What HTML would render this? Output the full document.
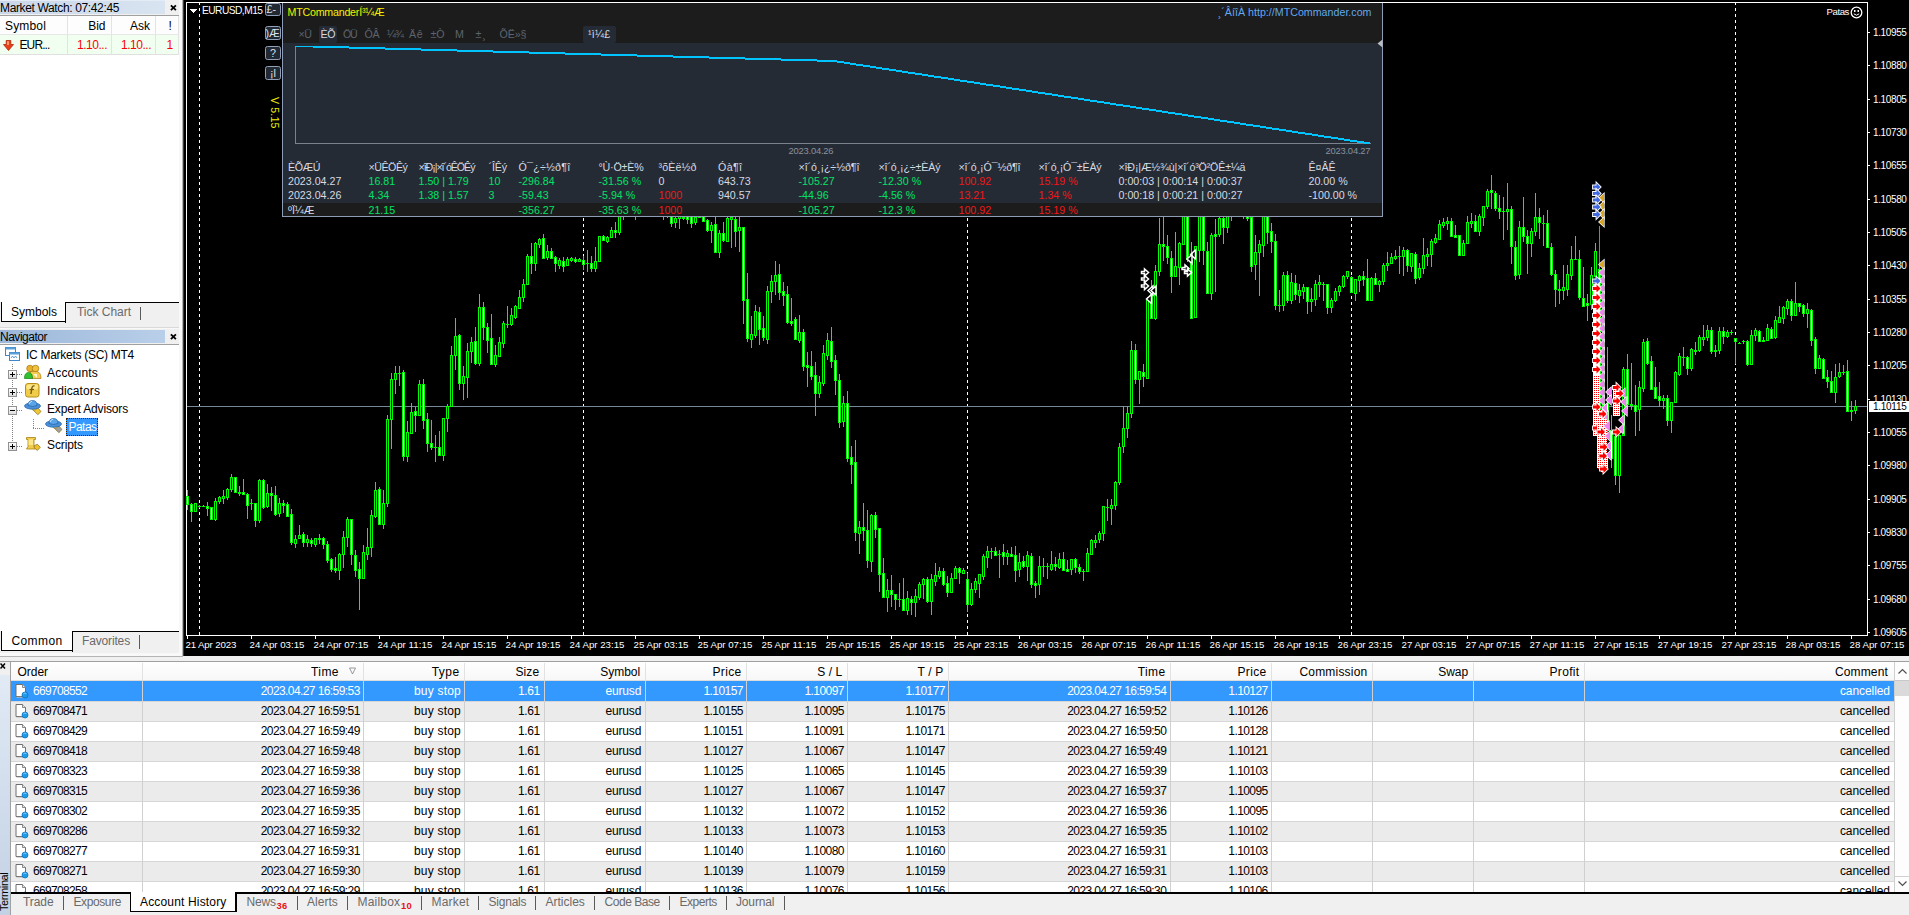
<!DOCTYPE html>
<html><head><meta charset="utf-8"><title>MT4</title>
<style>
html,body{margin:0;padding:0;}
body{width:1909px;height:915px;overflow:hidden;background:#f0f0f0;position:relative;font-family:"Liberation Sans",sans-serif;font-size:12px;}
.t{position:absolute;white-space:pre;line-height:1;}
.r{position:absolute;}
svg{position:absolute;overflow:visible;}
</style></head><body>
<div class="r" style="left:0px;top:0px;width:179px;height:656px;background:#fff;"></div>
<div class="r" style="left:0px;top:0px;width:179px;height:15px;background:#f0f0f0;"></div>
<div class="r" style="left:0px;top:0px;width:165px;height:14px;background:linear-gradient(to right,#cad7e8,#d9e4f1);"></div>
<div class="r" style="left:0px;top:0px;width:165px;height:1px;background:#e4ebf4;"></div>
<div class="t" style="top:1.64px;font-size:12px;color:#000;letter-spacing:-0.361px;left:0.00px;">Market Watch: 07:42:45</div>
<svg style="left:170px;top:4px" width="7" height="7" viewBox="0 0 7 7"><path d="M0.900 1.300 L5.900 6.100 M5.900 1.300 L0.900 6.100" stroke="#000" stroke-width="1.800" fill="none"/></svg>
<div class="r" style="left:0px;top:15px;width:179px;height:1px;background:#a0a0a0;"></div>
<div class="r" style="left:0px;top:16px;width:179px;height:19px;background:#fdfdfd;"></div>
<div class="r" style="left:67px;top:16px;width:1px;height:39px;background:#e3e3e3;"></div>
<div class="r" style="left:111px;top:16px;width:1px;height:39px;background:#e3e3e3;"></div>
<div class="r" style="left:155px;top:16px;width:1px;height:39px;background:#e3e3e3;"></div>
<div class="r" style="left:178px;top:16px;width:1px;height:39px;background:#e3e3e3;"></div>
<div class="r" style="left:0px;top:34px;width:179px;height:1px;background:#e8e8e8;"></div>
<div class="t" style="top:19.64px;font-size:12px;color:#000;letter-spacing:0.164px;left:5.00px;">Symbol</div>
<div class="t" style="top:19.64px;font-size:12px;color:#000;right:1803.50px;">Bid</div>
<div class="t" style="top:19.64px;font-size:12px;color:#000;right:1759.00px;">Ask</div>
<div class="t" style="top:19.64px;font-size:12px;color:#000;left:168.50px;">!</div>
<div class="r" style="left:0px;top:35px;width:67px;height:19px;background:#f0fff0;"></div>
<div class="r" style="left:68px;top:35px;width:43px;height:19px;background:#f0fff0;"></div>
<div class="r" style="left:112px;top:35px;width:43px;height:19px;background:#f0fff0;"></div>
<div class="r" style="left:156px;top:35px;width:22px;height:19px;background:#f0fff0;"></div>
<div class="r" style="left:0px;top:54px;width:179px;height:1px;background:#e0e0e0;"></div>
<svg style="left:3px;top:40px" width="11" height="11" viewBox="0 0 11 11"><path d="M3.2 0.5 H7.8 V4.5 H10.5 L5.5 10.5 L0.5 4.5 H3.2 Z" fill="#e8401c" stroke="#b02808" stroke-width="0.8"/><path d="M4 1.3 H6 V5 H4Z" fill="#ff9a6a"/></svg>
<div class="t" style="top:39.14px;font-size:12px;color:#000;letter-spacing:-0.890px;left:19.50px;">EUR...</div>
<div class="t" style="top:39.14px;font-size:12px;color:#ff0000;letter-spacing:-0.480px;right:1801.98px;">1.10...</div>
<div class="t" style="top:39.14px;font-size:12px;color:#ff0000;letter-spacing:-0.480px;right:1757.98px;">1.10...</div>
<div class="t" style="top:39.14px;font-size:12px;color:#ff0000;left:166.50px;">1</div>
<div class="r" style="left:0px;top:302px;width:179px;height:22px;background:#f0f0f0;"></div>
<div class="r" style="left:65px;top:302px;width:114px;height:1px;background:#000;"></div>
<div class="r" style="left:1px;top:302px;width:65px;height:20px;background:#fff;"></div>
<div class="r" style="left:1px;top:302px;width:1px;height:20px;background:#000;"></div>
<div class="r" style="left:65px;top:302px;width:1px;height:21px;background:#000;"></div>
<div class="r" style="left:1px;top:321px;width:65px;height:1.2px;background:#000;"></div>
<div class="t" style="top:306.14px;font-size:12px;color:#000;left:11.00px;">Symbols</div>
<div class="t" style="top:306.14px;font-size:12px;color:#6a6a6a;letter-spacing:-0.023px;left:77.00px;">Tick Chart</div>
<div class="r" style="left:140px;top:307px;width:1px;height:13px;background:#5a5a5a;"></div>
<div class="r" style="left:0px;top:324px;width:179px;height:6px;background:#f0f0f0;"></div>
<div class="r" style="left:0px;top:327px;width:182px;height:1px;background:#dadada;"></div>
<div class="r" style="left:0px;top:328px;width:182px;height:2px;background:#f8f8f8;"></div>
<div class="r" style="left:0px;top:329px;width:179px;height:15px;background:#f0f0f0;"></div>
<div class="r" style="left:0px;top:330px;width:165px;height:13px;background:linear-gradient(to right,#9cb7da,#b9cfe9);"></div>
<div class="t" style="top:330.64px;font-size:12px;color:#000;letter-spacing:-0.484px;left:0.00px;">Navigator</div>
<svg style="left:170px;top:333px" width="7" height="7" viewBox="0 0 7 7"><path d="M0.900 1.300 L5.900 6.100 M5.900 1.300 L0.900 6.100" stroke="#000" stroke-width="1.800" fill="none"/></svg>
<div class="r" style="left:0px;top:344px;width:179px;height:1px;background:#a0a0a0;"></div>
<div class="r" style="left:12px;top:364px;width:1px;height:84px;background:repeating-linear-gradient(to bottom,#808080 0 1px,transparent 1px 2px);"></div>
<div class="r" style="left:17px;top:374px;width:6px;height:1px;background:repeating-linear-gradient(to right,#808080 0 1px,transparent 1px 2px);"></div>
<div class="r" style="left:17px;top:392px;width:6px;height:1px;background:repeating-linear-gradient(to right,#808080 0 1px,transparent 1px 2px);"></div>
<div class="r" style="left:17px;top:410px;width:6px;height:1px;background:repeating-linear-gradient(to right,#808080 0 1px,transparent 1px 2px);"></div>
<div class="r" style="left:17px;top:446px;width:6px;height:1px;background:repeating-linear-gradient(to right,#808080 0 1px,transparent 1px 2px);"></div>
<div class="r" style="left:33px;top:419px;width:1px;height:10px;background:repeating-linear-gradient(to bottom,#808080 0 1px,transparent 1px 2px);"></div>
<div class="r" style="left:33px;top:428px;width:11px;height:1px;background:repeating-linear-gradient(to right,#808080 0 1px,transparent 1px 2px);"></div>
<div class="r" style="left:8px;top:370px;width:7px;height:7px;border:1px solid #919191;background:linear-gradient(#fff,#dcdcdc)"></div>
<div class="r" style="left:10px;top:374px;width:5px;height:1px;background:#000;"></div>
<div class="r" style="left:12px;top:372px;width:1px;height:5px;background:#000;"></div>
<div class="r" style="left:8px;top:388px;width:7px;height:7px;border:1px solid #919191;background:linear-gradient(#fff,#dcdcdc)"></div>
<div class="r" style="left:10px;top:392px;width:5px;height:1px;background:#000;"></div>
<div class="r" style="left:12px;top:390px;width:1px;height:5px;background:#000;"></div>
<div class="r" style="left:8px;top:406px;width:7px;height:7px;border:1px solid #919191;background:linear-gradient(#fff,#dcdcdc)"></div>
<div class="r" style="left:10px;top:410px;width:5px;height:1px;background:#000;"></div>
<div class="r" style="left:8px;top:442px;width:7px;height:7px;border:1px solid #919191;background:linear-gradient(#fff,#dcdcdc)"></div>
<div class="r" style="left:10px;top:446px;width:5px;height:1px;background:#000;"></div>
<div class="r" style="left:12px;top:444px;width:1px;height:5px;background:#000;"></div>
<svg style="left:5px;top:346px" width="16" height="16" viewBox="0 0 16 16">
<rect x="0.5" y="1.5" width="10" height="8" fill="#fff" stroke="#3f87c8"/><rect x="0.5" y="1.5" width="10" height="2" fill="#5aa0dc"/>
<rect x="4.5" y="6.5" width="10" height="8" fill="#fff" stroke="#3f87c8"/><rect x="4.5" y="6.5" width="10" height="2" fill="#5aa0dc"/>
<path d="M6 12 l1.5 -2 l1.5 2 l1.5 -2 l1.5 2" stroke="#3f87c8" fill="none" stroke-width="0.8"/></svg>
<svg style="left:24px;top:364px" width="18" height="17" viewBox="0 0 18 17">
<circle cx="6" cy="4.5" r="3.3" fill="#e8b030" stroke="#a87808" stroke-width=".7"/>
<circle cx="11.5" cy="4.5" r="3.3" fill="#f0c040" stroke="#a87808" stroke-width=".7"/>
<path d="M6 7.5 h7 q4 1 4 7 h-9 z" fill="#f4cc50" stroke="#a87808" stroke-width=".7"/>
<path d="M0.5 14.5 q0 -6 4 -6 q4 0 4 6 z" fill="#30c030" stroke="#108010" stroke-width=".7"/>
<path d="M9 10 l4 4 v-4z" fill="#fff6d0"/></svg>
<svg style="left:25px;top:383px" width="15" height="15" viewBox="0 0 15 15">
<rect x="0.5" y="0.5" width="13.5" height="13.5" rx="2.5" fill="#f0cc48" stroke="#b89018"/>
<rect x="1.5" y="1.5" width="11.5" height="5" rx="2" fill="#fbe78a"/>
<path d="M9.5 3 q-2.2 -.6 -2.6 2 l-1 6" stroke="#7a5c08" stroke-width="1.4" fill="none"/><path d="M4.5 6.5 h4.5" stroke="#7a5c08" stroke-width="1.2"/></svg>
<svg style="left:24px;top:400px" width="18" height="16" viewBox="0 0 18 16">
<path d="M8 7 l5 0 l4 4.5 l-3.2 3.2 l-5 -5z" fill="#f0c838" stroke="#8a6a10" stroke-width=".7"/>
<path d="M7 6 h6 l-1 4 h-3.5z" fill="#f4d860" stroke="#a88818" stroke-width=".6"/>
<ellipse cx="8.5" cy="6" rx="8" ry="3.2" fill="#4a90d8" stroke="#2060a8" stroke-width=".7"/>
<path d="M4 5.5 q0 -5 4.5 -5 q4.500 0 4.500 5 q-4.500 2 -9 0z" fill="#5aa4e8" stroke="#2060a8" stroke-width=".7"/>
<path d="M5 4 q1 -2.500 3 -2.800" stroke="#c8e4ff" stroke-width="1" fill="none"/></svg>
<svg style="left:45px;top:418px" width="18" height="16" viewBox="0 0 18 16">
<path d="M8 7 l5 0 l4 4.5 l-3.2 3.2 l-5 -5z" fill="#a0a0a0" stroke="#8a6a10" stroke-width=".7"/>
<path d="M7 6 h6 l-1 4 h-3.5z" fill="#f4d860" stroke="#a88818" stroke-width=".6"/>
<ellipse cx="8.5" cy="6" rx="8" ry="3.2" fill="#4a90d8" stroke="#2060a8" stroke-width=".7"/>
<path d="M4 5.5 q0 -5 4.5 -5 q4.500 0 4.500 5 q-4.500 2 -9 0z" fill="#5aa4e8" stroke="#2060a8" stroke-width=".7"/>
<path d="M5 4 q1 -2.500 3 -2.800" stroke="#c8e4ff" stroke-width="1" fill="none"/></svg>
<svg style="left:24px;top:436px" width="17" height="17" viewBox="0 0 17 17">
<path d="M2.500 1.500 h9 v2 h-1.500 v7 l1.500 2.500 h-9 l1.500 -2.500 v-7 h-1.500z" fill="#f0cc50" stroke="#a88010" stroke-width=".8"/>
<rect x="4.500" y="3.500" width="4.500" height="5.500" fill="#fbe88c"/>
<path d="M10.500 9.500 l3 -1.200 l2.800 3 l-3 3.200 l-3.200 -3z" fill="#f0c030" stroke="#8a6a10" stroke-width=".7"/></svg>
<div class="t" style="top:348.64px;font-size:12px;color:#000;letter-spacing:-0.281px;left:26.00px;">IC Markets (SC) MT4</div>
<div class="t" style="top:366.64px;font-size:12px;color:#000;letter-spacing:0.205px;left:47.00px;">Accounts</div>
<div class="t" style="top:384.64px;font-size:12px;color:#000;letter-spacing:0.097px;left:47.00px;">Indicators</div>
<div class="t" style="top:402.64px;font-size:12px;color:#000;letter-spacing:-0.158px;left:47.00px;">Expert Advisors</div>
<div class="r" style="left:66px;top:418px;width:32px;height:17.5px;background:#3399ff;border:1px dotted #402000;box-sizing:border-box"></div>
<div class="t" style="top:420.94px;font-size:12px;color:#fff;letter-spacing:-0.537px;left:68.50px;">Patas</div>
<div class="t" style="top:438.64px;font-size:12px;color:#000;letter-spacing:-0.096px;left:47.00px;">Scripts</div>
<div class="r" style="left:0px;top:631px;width:179px;height:25px;background:#f0f0f0;"></div>
<div class="r" style="left:72px;top:631px;width:107px;height:1px;background:#000;"></div>
<div class="r" style="left:1px;top:631px;width:72px;height:20px;background:#fff;"></div>
<div class="r" style="left:1px;top:631px;width:1px;height:20px;background:#000;"></div>
<div class="r" style="left:72px;top:631px;width:1px;height:21px;background:#000;"></div>
<div class="r" style="left:1px;top:650px;width:72px;height:1.2px;background:#000;"></div>
<div class="t" style="top:634.64px;font-size:12px;color:#000;letter-spacing:0.386px;left:11.50px;">Common</div>
<div class="t" style="top:634.64px;font-size:12px;color:#6a6a6a;letter-spacing:-0.150px;left:82.00px;">Favorites</div>
<div class="r" style="left:139px;top:635px;width:1px;height:14px;background:#5a5a5a;"></div>
<div class="r" style="left:179px;top:0px;width:3px;height:656px;background:#f8f8f8;"></div>
<div class="r" style="left:182px;top:0px;width:1px;height:656px;background:#b4b4b4;"></div>
<div class="r" style="left:183px;top:0px;width:1px;height:656px;background:#3c3c3c;"></div>
<div class="r" style="left:0px;top:653px;width:182px;height:3px;background:#f8f8f8;"></div>
<div class="r" style="left:0px;top:656px;width:183px;height:1px;background:#b4b4b4;"></div>
<div class="r" style="left:0px;top:657px;width:1909px;height:5px;background:#f0f0f0;"></div>
<div class="r" style="left:184px;top:0px;width:1725px;height:656px;background:#000;"></div>
<svg style="left:0;top:0" width="1909" height="656" viewBox="0 0 1909 656" shape-rendering="crispEdges">
<rect x="186" y="2" width="1682" height="1" fill="#fff"/>
<rect x="186" y="2" width="1" height="634" fill="#fff"/>
<rect x="1867" y="2" width="1" height="634" fill="#fff"/>
<rect x="186" y="635" width="1682" height="1" fill="#fff"/>
<line x1="199.5" y1="3" x2="199.5" y2="635" stroke="#fff" stroke-width="1" stroke-dasharray="3 3" stroke-dashoffset="1"/>
<line x1="583.5" y1="3" x2="583.5" y2="635" stroke="#fff" stroke-width="1" stroke-dasharray="3 3" stroke-dashoffset="1"/>
<line x1="967.5" y1="3" x2="967.5" y2="635" stroke="#fff" stroke-width="1" stroke-dasharray="3 3" stroke-dashoffset="1"/>
<line x1="1351.5" y1="3" x2="1351.5" y2="635" stroke="#fff" stroke-width="1" stroke-dasharray="3 3" stroke-dashoffset="1"/>
<line x1="1735.5" y1="3" x2="1735.5" y2="635" stroke="#fff" stroke-width="1" stroke-dasharray="3 3" stroke-dashoffset="1"/>
<rect x="187" y="406" width="1680" height="1" fill="#778899"/>
<rect x="187" y="490" width="1" height="20" fill="#00ff00"/>
<rect x="186" y="496" width="3" height="9" fill="#00ff00"/>
<rect x="187" y="497" width="1" height="7" fill="#fff"/>
<rect x="191" y="503" width="1" height="19" fill="#00ff00"/>
<rect x="190" y="504" width="3" height="8" fill="#00ff00"/>
<rect x="191" y="505" width="1" height="6" fill="#fff"/>
<rect x="195" y="503" width="1" height="8" fill="#00ff00"/>
<rect x="194" y="503" width="3" height="9" fill="#00ff00"/>
<rect x="195" y="504" width="1" height="7" fill="#000"/>
<rect x="199" y="505" width="1" height="3" fill="#00ff00"/>
<rect x="198" y="506" width="3" height="1" fill="#00ff00"/>
<rect x="203" y="505" width="1" height="2" fill="#00ff00"/>
<rect x="202" y="506" width="3" height="1" fill="#00ff00"/>
<rect x="207" y="502" width="1" height="14" fill="#00ff00"/>
<rect x="206" y="506" width="3" height="3" fill="#00ff00"/>
<rect x="207" y="507" width="1" height="1" fill="#fff"/>
<rect x="211" y="507" width="1" height="12" fill="#00ff00"/>
<rect x="210" y="507" width="3" height="13" fill="#00ff00"/>
<rect x="211" y="508" width="1" height="11" fill="#fff"/>
<rect x="215" y="498" width="1" height="23" fill="#00ff00"/>
<rect x="214" y="501" width="3" height="19" fill="#00ff00"/>
<rect x="215" y="502" width="1" height="17" fill="#000"/>
<rect x="219" y="496" width="1" height="8" fill="#00ff00"/>
<rect x="218" y="497" width="3" height="5" fill="#00ff00"/>
<rect x="219" y="498" width="1" height="3" fill="#000"/>
<rect x="223" y="490" width="1" height="14" fill="#00ff00"/>
<rect x="222" y="496" width="3" height="3" fill="#00ff00"/>
<rect x="223" y="497" width="1" height="1" fill="#000"/>
<rect x="227" y="488" width="1" height="12" fill="#00ff00"/>
<rect x="226" y="489" width="3" height="9" fill="#00ff00"/>
<rect x="227" y="490" width="1" height="7" fill="#000"/>
<rect x="231" y="474" width="1" height="18" fill="#00ff00"/>
<rect x="230" y="477" width="3" height="13" fill="#00ff00"/>
<rect x="231" y="478" width="1" height="11" fill="#000"/>
<rect x="235" y="477" width="1" height="15" fill="#00ff00"/>
<rect x="234" y="477" width="3" height="16" fill="#00ff00"/>
<rect x="235" y="478" width="1" height="14" fill="#fff"/>
<rect x="239" y="486" width="1" height="10" fill="#00ff00"/>
<rect x="238" y="492" width="3" height="2" fill="#00ff00"/>
<rect x="243" y="479" width="1" height="16" fill="#00ff00"/>
<rect x="242" y="492" width="3" height="3" fill="#00ff00"/>
<rect x="243" y="493" width="1" height="1" fill="#fff"/>
<rect x="247" y="493" width="1" height="26" fill="#00ff00"/>
<rect x="246" y="494" width="3" height="12" fill="#00ff00"/>
<rect x="247" y="495" width="1" height="10" fill="#fff"/>
<rect x="251" y="499" width="1" height="11" fill="#00ff00"/>
<rect x="250" y="503" width="3" height="1" fill="#00ff00"/>
<rect x="255" y="503" width="1" height="24" fill="#00ff00"/>
<rect x="254" y="503" width="3" height="18" fill="#00ff00"/>
<rect x="255" y="504" width="1" height="16" fill="#fff"/>
<rect x="259" y="479" width="1" height="44" fill="#00ff00"/>
<rect x="258" y="480" width="3" height="41" fill="#00ff00"/>
<rect x="259" y="481" width="1" height="39" fill="#000"/>
<rect x="263" y="479" width="1" height="30" fill="#00ff00"/>
<rect x="262" y="480" width="3" height="28" fill="#00ff00"/>
<rect x="263" y="481" width="1" height="26" fill="#fff"/>
<rect x="267" y="484" width="1" height="24" fill="#00ff00"/>
<rect x="266" y="493" width="3" height="14" fill="#00ff00"/>
<rect x="267" y="494" width="1" height="12" fill="#000"/>
<rect x="271" y="487" width="1" height="24" fill="#00ff00"/>
<rect x="270" y="493" width="3" height="3" fill="#00ff00"/>
<rect x="271" y="494" width="1" height="1" fill="#fff"/>
<rect x="275" y="486" width="1" height="30" fill="#00ff00"/>
<rect x="274" y="495" width="3" height="20" fill="#00ff00"/>
<rect x="275" y="496" width="1" height="18" fill="#fff"/>
<rect x="279" y="498" width="1" height="19" fill="#00ff00"/>
<rect x="278" y="503" width="3" height="11" fill="#00ff00"/>
<rect x="279" y="504" width="1" height="9" fill="#000"/>
<rect x="283" y="500" width="1" height="13" fill="#00ff00"/>
<rect x="282" y="503" width="3" height="3" fill="#00ff00"/>
<rect x="283" y="504" width="1" height="1" fill="#fff"/>
<rect x="287" y="502" width="1" height="15" fill="#00ff00"/>
<rect x="286" y="504" width="3" height="13" fill="#00ff00"/>
<rect x="287" y="505" width="1" height="11" fill="#fff"/>
<rect x="291" y="509" width="1" height="36" fill="#00ff00"/>
<rect x="290" y="514" width="3" height="29" fill="#00ff00"/>
<rect x="291" y="515" width="1" height="27" fill="#fff"/>
<rect x="295" y="535" width="1" height="13" fill="#00ff00"/>
<rect x="294" y="539" width="3" height="5" fill="#00ff00"/>
<rect x="295" y="540" width="1" height="3" fill="#000"/>
<rect x="299" y="525" width="1" height="14" fill="#00ff00"/>
<rect x="298" y="535" width="3" height="4" fill="#00ff00"/>
<rect x="299" y="536" width="1" height="2" fill="#000"/>
<rect x="303" y="532" width="1" height="15" fill="#00ff00"/>
<rect x="302" y="534" width="3" height="9" fill="#00ff00"/>
<rect x="303" y="535" width="1" height="7" fill="#fff"/>
<rect x="307" y="535" width="1" height="12" fill="#00ff00"/>
<rect x="306" y="539" width="3" height="4" fill="#00ff00"/>
<rect x="307" y="540" width="1" height="2" fill="#000"/>
<rect x="311" y="538" width="1" height="9" fill="#00ff00"/>
<rect x="310" y="540" width="3" height="4" fill="#00ff00"/>
<rect x="311" y="541" width="1" height="2" fill="#fff"/>
<rect x="315" y="538" width="1" height="9" fill="#00ff00"/>
<rect x="314" y="538" width="3" height="7" fill="#00ff00"/>
<rect x="315" y="539" width="1" height="5" fill="#000"/>
<rect x="319" y="534" width="1" height="10" fill="#00ff00"/>
<rect x="318" y="538" width="3" height="2" fill="#00ff00"/>
<rect x="323" y="537" width="1" height="12" fill="#00ff00"/>
<rect x="322" y="538" width="3" height="7" fill="#00ff00"/>
<rect x="323" y="539" width="1" height="5" fill="#fff"/>
<rect x="327" y="541" width="1" height="22" fill="#00ff00"/>
<rect x="326" y="544" width="3" height="17" fill="#00ff00"/>
<rect x="327" y="545" width="1" height="15" fill="#fff"/>
<rect x="331" y="558" width="1" height="14" fill="#00ff00"/>
<rect x="330" y="559" width="3" height="11" fill="#00ff00"/>
<rect x="331" y="560" width="1" height="9" fill="#fff"/>
<rect x="335" y="557" width="1" height="16" fill="#00ff00"/>
<rect x="334" y="568" width="3" height="3" fill="#00ff00"/>
<rect x="335" y="569" width="1" height="1" fill="#fff"/>
<rect x="339" y="553" width="1" height="27" fill="#00ff00"/>
<rect x="338" y="554" width="3" height="17" fill="#00ff00"/>
<rect x="339" y="555" width="1" height="15" fill="#000"/>
<rect x="343" y="531" width="1" height="37" fill="#00ff00"/>
<rect x="342" y="537" width="3" height="18" fill="#00ff00"/>
<rect x="343" y="538" width="1" height="16" fill="#000"/>
<rect x="347" y="517" width="1" height="30" fill="#00ff00"/>
<rect x="346" y="519" width="3" height="19" fill="#00ff00"/>
<rect x="347" y="520" width="1" height="17" fill="#000"/>
<rect x="351" y="519" width="1" height="46" fill="#00ff00"/>
<rect x="350" y="519" width="3" height="36" fill="#00ff00"/>
<rect x="351" y="520" width="1" height="34" fill="#fff"/>
<rect x="355" y="550" width="1" height="27" fill="#00ff00"/>
<rect x="354" y="555" width="3" height="16" fill="#00ff00"/>
<rect x="355" y="556" width="1" height="14" fill="#fff"/>
<rect x="359" y="562" width="1" height="48" fill="#00ff00"/>
<rect x="358" y="569" width="3" height="10" fill="#00ff00"/>
<rect x="359" y="570" width="1" height="8" fill="#fff"/>
<rect x="363" y="545" width="1" height="34" fill="#00ff00"/>
<rect x="362" y="552" width="3" height="27" fill="#00ff00"/>
<rect x="363" y="553" width="1" height="25" fill="#000"/>
<rect x="367" y="528" width="1" height="32" fill="#00ff00"/>
<rect x="366" y="547" width="3" height="8" fill="#00ff00"/>
<rect x="367" y="548" width="1" height="6" fill="#000"/>
<rect x="371" y="510" width="1" height="47" fill="#00ff00"/>
<rect x="370" y="515" width="3" height="33" fill="#00ff00"/>
<rect x="371" y="516" width="1" height="31" fill="#000"/>
<rect x="375" y="482" width="1" height="36" fill="#00ff00"/>
<rect x="374" y="490" width="3" height="27" fill="#00ff00"/>
<rect x="375" y="491" width="1" height="25" fill="#000"/>
<rect x="379" y="487" width="1" height="37" fill="#00ff00"/>
<rect x="378" y="489" width="3" height="36" fill="#00ff00"/>
<rect x="379" y="490" width="1" height="34" fill="#fff"/>
<rect x="383" y="490" width="1" height="39" fill="#00ff00"/>
<rect x="382" y="503" width="3" height="22" fill="#00ff00"/>
<rect x="383" y="504" width="1" height="20" fill="#000"/>
<rect x="387" y="415" width="1" height="92" fill="#00ff00"/>
<rect x="386" y="419" width="3" height="85" fill="#00ff00"/>
<rect x="387" y="420" width="1" height="83" fill="#000"/>
<rect x="391" y="373" width="1" height="76" fill="#00ff00"/>
<rect x="390" y="379" width="3" height="41" fill="#00ff00"/>
<rect x="391" y="380" width="1" height="39" fill="#000"/>
<rect x="395" y="366" width="1" height="28" fill="#00ff00"/>
<rect x="394" y="373" width="3" height="7" fill="#00ff00"/>
<rect x="395" y="374" width="1" height="5" fill="#000"/>
<rect x="399" y="366" width="1" height="20" fill="#00ff00"/>
<rect x="398" y="373" width="3" height="1" fill="#00ff00"/>
<rect x="403" y="370" width="1" height="91" fill="#00ff00"/>
<rect x="402" y="372" width="3" height="85" fill="#00ff00"/>
<rect x="403" y="373" width="1" height="83" fill="#fff"/>
<rect x="407" y="421" width="1" height="41" fill="#00ff00"/>
<rect x="406" y="432" width="3" height="25" fill="#00ff00"/>
<rect x="407" y="433" width="1" height="23" fill="#000"/>
<rect x="411" y="403" width="1" height="31" fill="#00ff00"/>
<rect x="410" y="412" width="3" height="22" fill="#00ff00"/>
<rect x="411" y="413" width="1" height="20" fill="#000"/>
<rect x="415" y="407" width="1" height="25" fill="#00ff00"/>
<rect x="414" y="411" width="3" height="5" fill="#00ff00"/>
<rect x="415" y="412" width="1" height="3" fill="#fff"/>
<rect x="419" y="380" width="1" height="36" fill="#00ff00"/>
<rect x="418" y="384" width="3" height="32" fill="#00ff00"/>
<rect x="419" y="385" width="1" height="30" fill="#000"/>
<rect x="423" y="379" width="1" height="50" fill="#00ff00"/>
<rect x="422" y="384" width="3" height="37" fill="#00ff00"/>
<rect x="423" y="385" width="1" height="35" fill="#fff"/>
<rect x="427" y="413" width="1" height="39" fill="#00ff00"/>
<rect x="426" y="419" width="3" height="25" fill="#00ff00"/>
<rect x="427" y="420" width="1" height="23" fill="#fff"/>
<rect x="431" y="420" width="1" height="30" fill="#00ff00"/>
<rect x="430" y="443" width="3" height="5" fill="#00ff00"/>
<rect x="431" y="444" width="1" height="3" fill="#fff"/>
<rect x="435" y="435" width="1" height="27" fill="#00ff00"/>
<rect x="434" y="447" width="3" height="1" fill="#00ff00"/>
<rect x="439" y="431" width="1" height="24" fill="#00ff00"/>
<rect x="438" y="447" width="3" height="9" fill="#00ff00"/>
<rect x="439" y="448" width="1" height="7" fill="#fff"/>
<rect x="443" y="418" width="1" height="43" fill="#00ff00"/>
<rect x="442" y="418" width="3" height="38" fill="#00ff00"/>
<rect x="443" y="419" width="1" height="36" fill="#000"/>
<rect x="447" y="404" width="1" height="28" fill="#00ff00"/>
<rect x="446" y="406" width="3" height="13" fill="#00ff00"/>
<rect x="447" y="407" width="1" height="11" fill="#000"/>
<rect x="451" y="346" width="1" height="60" fill="#00ff00"/>
<rect x="450" y="355" width="3" height="52" fill="#00ff00"/>
<rect x="451" y="356" width="1" height="50" fill="#000"/>
<rect x="455" y="318" width="1" height="52" fill="#00ff00"/>
<rect x="454" y="336" width="3" height="20" fill="#00ff00"/>
<rect x="455" y="337" width="1" height="18" fill="#000"/>
<rect x="459" y="334" width="1" height="56" fill="#00ff00"/>
<rect x="458" y="335" width="3" height="49" fill="#00ff00"/>
<rect x="459" y="336" width="1" height="47" fill="#fff"/>
<rect x="463" y="366" width="1" height="34" fill="#00ff00"/>
<rect x="462" y="376" width="3" height="8" fill="#00ff00"/>
<rect x="463" y="377" width="1" height="6" fill="#000"/>
<rect x="467" y="343" width="1" height="55" fill="#00ff00"/>
<rect x="466" y="351" width="3" height="27" fill="#00ff00"/>
<rect x="467" y="352" width="1" height="25" fill="#000"/>
<rect x="471" y="337" width="1" height="26" fill="#00ff00"/>
<rect x="470" y="342" width="3" height="10" fill="#00ff00"/>
<rect x="471" y="343" width="1" height="8" fill="#000"/>
<rect x="475" y="327" width="1" height="38" fill="#00ff00"/>
<rect x="474" y="341" width="3" height="23" fill="#00ff00"/>
<rect x="475" y="342" width="1" height="21" fill="#fff"/>
<rect x="479" y="294" width="1" height="72" fill="#00ff00"/>
<rect x="478" y="307" width="3" height="57" fill="#00ff00"/>
<rect x="479" y="308" width="1" height="55" fill="#000"/>
<rect x="483" y="302" width="1" height="38" fill="#00ff00"/>
<rect x="482" y="307" width="3" height="21" fill="#00ff00"/>
<rect x="483" y="308" width="1" height="19" fill="#fff"/>
<rect x="487" y="323" width="1" height="30" fill="#00ff00"/>
<rect x="486" y="327" width="3" height="14" fill="#00ff00"/>
<rect x="487" y="328" width="1" height="12" fill="#fff"/>
<rect x="491" y="314" width="1" height="51" fill="#00ff00"/>
<rect x="490" y="338" width="3" height="27" fill="#00ff00"/>
<rect x="491" y="339" width="1" height="25" fill="#fff"/>
<rect x="495" y="345" width="1" height="22" fill="#00ff00"/>
<rect x="494" y="355" width="3" height="10" fill="#00ff00"/>
<rect x="495" y="356" width="1" height="8" fill="#000"/>
<rect x="499" y="337" width="1" height="20" fill="#00ff00"/>
<rect x="498" y="342" width="3" height="15" fill="#00ff00"/>
<rect x="499" y="343" width="1" height="13" fill="#000"/>
<rect x="503" y="321" width="1" height="27" fill="#00ff00"/>
<rect x="502" y="323" width="3" height="21" fill="#00ff00"/>
<rect x="503" y="324" width="1" height="19" fill="#000"/>
<rect x="507" y="306" width="1" height="22" fill="#00ff00"/>
<rect x="506" y="324" width="3" height="1" fill="#00ff00"/>
<rect x="511" y="308" width="1" height="18" fill="#00ff00"/>
<rect x="510" y="315" width="3" height="10" fill="#00ff00"/>
<rect x="511" y="316" width="1" height="8" fill="#000"/>
<rect x="515" y="305" width="1" height="14" fill="#00ff00"/>
<rect x="514" y="306" width="3" height="12" fill="#00ff00"/>
<rect x="515" y="307" width="1" height="10" fill="#000"/>
<rect x="519" y="290" width="1" height="19" fill="#00ff00"/>
<rect x="518" y="297" width="3" height="12" fill="#00ff00"/>
<rect x="519" y="298" width="1" height="10" fill="#000"/>
<rect x="523" y="279" width="1" height="23" fill="#00ff00"/>
<rect x="522" y="284" width="3" height="14" fill="#00ff00"/>
<rect x="523" y="285" width="1" height="12" fill="#000"/>
<rect x="527" y="254" width="1" height="30" fill="#00ff00"/>
<rect x="526" y="256" width="3" height="29" fill="#00ff00"/>
<rect x="527" y="257" width="1" height="27" fill="#000"/>
<rect x="531" y="243" width="1" height="31" fill="#00ff00"/>
<rect x="530" y="256" width="3" height="8" fill="#00ff00"/>
<rect x="531" y="257" width="1" height="6" fill="#fff"/>
<rect x="535" y="242" width="1" height="29" fill="#00ff00"/>
<rect x="534" y="243" width="3" height="21" fill="#00ff00"/>
<rect x="535" y="244" width="1" height="19" fill="#000"/>
<rect x="539" y="238" width="1" height="10" fill="#00ff00"/>
<rect x="538" y="239" width="3" height="6" fill="#00ff00"/>
<rect x="539" y="240" width="1" height="4" fill="#000"/>
<rect x="543" y="234" width="1" height="25" fill="#00ff00"/>
<rect x="542" y="238" width="3" height="21" fill="#00ff00"/>
<rect x="543" y="239" width="1" height="19" fill="#fff"/>
<rect x="547" y="245" width="1" height="15" fill="#00ff00"/>
<rect x="546" y="251" width="3" height="7" fill="#00ff00"/>
<rect x="547" y="252" width="1" height="5" fill="#000"/>
<rect x="551" y="248" width="1" height="11" fill="#00ff00"/>
<rect x="550" y="251" width="3" height="8" fill="#00ff00"/>
<rect x="551" y="252" width="1" height="6" fill="#fff"/>
<rect x="555" y="256" width="1" height="16" fill="#00ff00"/>
<rect x="554" y="257" width="3" height="7" fill="#00ff00"/>
<rect x="555" y="258" width="1" height="5" fill="#fff"/>
<rect x="559" y="258" width="1" height="11" fill="#00ff00"/>
<rect x="558" y="260" width="3" height="6" fill="#00ff00"/>
<rect x="559" y="261" width="1" height="4" fill="#000"/>
<rect x="563" y="257" width="1" height="15" fill="#00ff00"/>
<rect x="562" y="261" width="3" height="6" fill="#00ff00"/>
<rect x="563" y="262" width="1" height="4" fill="#fff"/>
<rect x="567" y="257" width="1" height="9" fill="#00ff00"/>
<rect x="566" y="259" width="3" height="7" fill="#00ff00"/>
<rect x="567" y="260" width="1" height="5" fill="#000"/>
<rect x="571" y="257" width="1" height="5" fill="#00ff00"/>
<rect x="570" y="258" width="3" height="3" fill="#00ff00"/>
<rect x="571" y="259" width="1" height="1" fill="#000"/>
<rect x="575" y="257" width="1" height="6" fill="#00ff00"/>
<rect x="574" y="259" width="3" height="3" fill="#00ff00"/>
<rect x="575" y="260" width="1" height="1" fill="#fff"/>
<rect x="579" y="258" width="1" height="4" fill="#00ff00"/>
<rect x="578" y="259" width="3" height="3" fill="#00ff00"/>
<rect x="579" y="260" width="1" height="1" fill="#000"/>
<rect x="583" y="256" width="1" height="14" fill="#00ff00"/>
<rect x="582" y="260" width="3" height="5" fill="#00ff00"/>
<rect x="583" y="261" width="1" height="3" fill="#fff"/>
<rect x="587" y="250" width="1" height="22" fill="#00ff00"/>
<rect x="586" y="263" width="3" height="1" fill="#00ff00"/>
<rect x="591" y="256" width="1" height="16" fill="#00ff00"/>
<rect x="590" y="263" width="3" height="6" fill="#00ff00"/>
<rect x="591" y="264" width="1" height="4" fill="#fff"/>
<rect x="595" y="247" width="1" height="25" fill="#00ff00"/>
<rect x="594" y="261" width="3" height="8" fill="#00ff00"/>
<rect x="595" y="262" width="1" height="6" fill="#000"/>
<rect x="599" y="236" width="1" height="26" fill="#00ff00"/>
<rect x="598" y="236" width="3" height="26" fill="#00ff00"/>
<rect x="599" y="237" width="1" height="24" fill="#000"/>
<rect x="603" y="235" width="1" height="6" fill="#00ff00"/>
<rect x="602" y="236" width="3" height="5" fill="#00ff00"/>
<rect x="603" y="237" width="1" height="3" fill="#fff"/>
<rect x="607" y="236" width="1" height="7" fill="#00ff00"/>
<rect x="606" y="237" width="3" height="5" fill="#00ff00"/>
<rect x="607" y="238" width="1" height="3" fill="#000"/>
<rect x="611" y="227" width="1" height="11" fill="#00ff00"/>
<rect x="610" y="230" width="3" height="8" fill="#00ff00"/>
<rect x="611" y="231" width="1" height="6" fill="#000"/>
<rect x="615" y="222" width="1" height="16" fill="#00ff00"/>
<rect x="614" y="230" width="3" height="3" fill="#00ff00"/>
<rect x="615" y="231" width="1" height="1" fill="#fff"/>
<rect x="619" y="212" width="1" height="23" fill="#00ff00"/>
<rect x="618" y="214" width="3" height="19" fill="#00ff00"/>
<rect x="619" y="215" width="1" height="17" fill="#000"/>
<rect x="623" y="206" width="1" height="14" fill="#00ff00"/>
<rect x="622" y="208" width="3" height="7" fill="#00ff00"/>
<rect x="623" y="209" width="1" height="5" fill="#000"/>
<rect x="627" y="202" width="1" height="10" fill="#00ff00"/>
<rect x="626" y="204" width="3" height="5" fill="#00ff00"/>
<rect x="627" y="205" width="1" height="3" fill="#000"/>
<rect x="631" y="200" width="1" height="14" fill="#00ff00"/>
<rect x="630" y="204" width="3" height="7" fill="#00ff00"/>
<rect x="631" y="205" width="1" height="5" fill="#fff"/>
<rect x="635" y="202" width="1" height="18" fill="#00ff00"/>
<rect x="634" y="206" width="3" height="5" fill="#00ff00"/>
<rect x="635" y="207" width="1" height="3" fill="#fff"/>
<rect x="639" y="200" width="1" height="12" fill="#00ff00"/>
<rect x="638" y="204" width="3" height="6" fill="#00ff00"/>
<rect x="639" y="205" width="1" height="4" fill="#000"/>
<rect x="643" y="198" width="1" height="12" fill="#00ff00"/>
<rect x="642" y="202" width="3" height="5" fill="#00ff00"/>
<rect x="643" y="203" width="1" height="3" fill="#000"/>
<rect x="647" y="196" width="1" height="14" fill="#00ff00"/>
<rect x="646" y="200" width="3" height="7" fill="#00ff00"/>
<rect x="647" y="201" width="1" height="5" fill="#fff"/>
<rect x="651" y="198" width="1" height="14" fill="#00ff00"/>
<rect x="650" y="202" width="3" height="7" fill="#00ff00"/>
<rect x="651" y="203" width="1" height="5" fill="#fff"/>
<rect x="655" y="200" width="1" height="14" fill="#00ff00"/>
<rect x="654" y="204" width="3" height="5" fill="#00ff00"/>
<rect x="655" y="205" width="1" height="3" fill="#000"/>
<rect x="659" y="202" width="1" height="13" fill="#00ff00"/>
<rect x="658" y="206" width="3" height="5" fill="#00ff00"/>
<rect x="659" y="207" width="1" height="3" fill="#fff"/>
<rect x="663" y="204" width="1" height="16" fill="#00ff00"/>
<rect x="662" y="208" width="3" height="5" fill="#00ff00"/>
<rect x="663" y="209" width="1" height="3" fill="#fff"/>
<rect x="667" y="206" width="1" height="12" fill="#00ff00"/>
<rect x="666" y="209" width="3" height="6" fill="#00ff00"/>
<rect x="667" y="210" width="1" height="4" fill="#fff"/>
<rect x="671" y="214" width="1" height="13" fill="#00ff00"/>
<rect x="670" y="216" width="3" height="8" fill="#00ff00"/>
<rect x="671" y="217" width="1" height="6" fill="#fff"/>
<rect x="675" y="216" width="1" height="12" fill="#00ff00"/>
<rect x="674" y="218" width="3" height="5" fill="#00ff00"/>
<rect x="675" y="219" width="1" height="3" fill="#000"/>
<rect x="679" y="212" width="1" height="17" fill="#00ff00"/>
<rect x="678" y="214" width="3" height="5" fill="#00ff00"/>
<rect x="679" y="215" width="1" height="3" fill="#000"/>
<rect x="683" y="212" width="1" height="8" fill="#00ff00"/>
<rect x="682" y="217" width="3" height="2" fill="#00ff00"/>
<rect x="687" y="212" width="1" height="12" fill="#00ff00"/>
<rect x="686" y="215" width="3" height="5" fill="#00ff00"/>
<rect x="687" y="216" width="1" height="3" fill="#fff"/>
<rect x="691" y="214" width="1" height="14" fill="#00ff00"/>
<rect x="690" y="216" width="3" height="8" fill="#00ff00"/>
<rect x="691" y="217" width="1" height="6" fill="#fff"/>
<rect x="695" y="214" width="1" height="11" fill="#00ff00"/>
<rect x="694" y="217" width="3" height="6" fill="#00ff00"/>
<rect x="695" y="218" width="1" height="4" fill="#000"/>
<rect x="699" y="210" width="1" height="8" fill="#00ff00"/>
<rect x="698" y="212" width="3" height="6" fill="#00ff00"/>
<rect x="699" y="213" width="1" height="4" fill="#000"/>
<rect x="703" y="210" width="1" height="12" fill="#00ff00"/>
<rect x="702" y="214" width="3" height="8" fill="#00ff00"/>
<rect x="703" y="215" width="1" height="6" fill="#fff"/>
<rect x="707" y="219" width="1" height="13" fill="#00ff00"/>
<rect x="706" y="220" width="3" height="11" fill="#00ff00"/>
<rect x="707" y="221" width="1" height="9" fill="#fff"/>
<rect x="711" y="222" width="1" height="21" fill="#00ff00"/>
<rect x="710" y="225" width="3" height="6" fill="#00ff00"/>
<rect x="711" y="226" width="1" height="4" fill="#000"/>
<rect x="715" y="216" width="1" height="37" fill="#00ff00"/>
<rect x="714" y="224" width="3" height="29" fill="#00ff00"/>
<rect x="715" y="225" width="1" height="27" fill="#fff"/>
<rect x="719" y="230" width="1" height="28" fill="#00ff00"/>
<rect x="718" y="233" width="3" height="20" fill="#00ff00"/>
<rect x="719" y="234" width="1" height="18" fill="#000"/>
<rect x="723" y="222" width="1" height="20" fill="#00ff00"/>
<rect x="722" y="233" width="3" height="8" fill="#00ff00"/>
<rect x="723" y="234" width="1" height="6" fill="#fff"/>
<rect x="727" y="214" width="1" height="28" fill="#00ff00"/>
<rect x="726" y="218" width="3" height="24" fill="#00ff00"/>
<rect x="727" y="219" width="1" height="22" fill="#000"/>
<rect x="731" y="214" width="1" height="34" fill="#00ff00"/>
<rect x="730" y="217" width="3" height="3" fill="#00ff00"/>
<rect x="731" y="218" width="1" height="1" fill="#000"/>
<rect x="735" y="216" width="1" height="31" fill="#00ff00"/>
<rect x="734" y="219" width="3" height="13" fill="#00ff00"/>
<rect x="735" y="220" width="1" height="11" fill="#fff"/>
<rect x="739" y="216" width="1" height="36" fill="#00ff00"/>
<rect x="738" y="227" width="3" height="4" fill="#00ff00"/>
<rect x="739" y="228" width="1" height="2" fill="#000"/>
<rect x="743" y="227" width="1" height="97" fill="#00ff00"/>
<rect x="742" y="227" width="3" height="74" fill="#00ff00"/>
<rect x="743" y="228" width="1" height="72" fill="#fff"/>
<rect x="747" y="273" width="1" height="69" fill="#00ff00"/>
<rect x="746" y="299" width="3" height="40" fill="#00ff00"/>
<rect x="747" y="300" width="1" height="38" fill="#fff"/>
<rect x="751" y="316" width="1" height="32" fill="#00ff00"/>
<rect x="750" y="334" width="3" height="6" fill="#00ff00"/>
<rect x="751" y="335" width="1" height="4" fill="#000"/>
<rect x="755" y="305" width="1" height="33" fill="#00ff00"/>
<rect x="754" y="311" width="3" height="25" fill="#00ff00"/>
<rect x="755" y="312" width="1" height="23" fill="#000"/>
<rect x="759" y="307" width="1" height="38" fill="#00ff00"/>
<rect x="758" y="312" width="3" height="18" fill="#00ff00"/>
<rect x="759" y="313" width="1" height="16" fill="#fff"/>
<rect x="763" y="316" width="1" height="25" fill="#00ff00"/>
<rect x="762" y="328" width="3" height="10" fill="#00ff00"/>
<rect x="763" y="329" width="1" height="8" fill="#fff"/>
<rect x="767" y="286" width="1" height="58" fill="#00ff00"/>
<rect x="766" y="291" width="3" height="49" fill="#00ff00"/>
<rect x="767" y="292" width="1" height="47" fill="#000"/>
<rect x="771" y="275" width="1" height="28" fill="#00ff00"/>
<rect x="770" y="281" width="3" height="11" fill="#00ff00"/>
<rect x="771" y="282" width="1" height="9" fill="#000"/>
<rect x="775" y="261" width="1" height="34" fill="#00ff00"/>
<rect x="774" y="275" width="3" height="7" fill="#00ff00"/>
<rect x="775" y="276" width="1" height="5" fill="#000"/>
<rect x="779" y="264" width="1" height="36" fill="#00ff00"/>
<rect x="778" y="274" width="3" height="19" fill="#00ff00"/>
<rect x="779" y="275" width="1" height="17" fill="#fff"/>
<rect x="783" y="282" width="1" height="24" fill="#00ff00"/>
<rect x="782" y="291" width="3" height="5" fill="#00ff00"/>
<rect x="783" y="292" width="1" height="3" fill="#fff"/>
<rect x="787" y="286" width="1" height="38" fill="#00ff00"/>
<rect x="786" y="294" width="3" height="29" fill="#00ff00"/>
<rect x="787" y="295" width="1" height="27" fill="#fff"/>
<rect x="791" y="298" width="1" height="28" fill="#00ff00"/>
<rect x="790" y="321" width="3" height="3" fill="#00ff00"/>
<rect x="791" y="322" width="1" height="1" fill="#fff"/>
<rect x="795" y="317" width="1" height="23" fill="#00ff00"/>
<rect x="794" y="319" width="3" height="21" fill="#00ff00"/>
<rect x="795" y="320" width="1" height="19" fill="#fff"/>
<rect x="799" y="315" width="1" height="28" fill="#00ff00"/>
<rect x="798" y="332" width="3" height="9" fill="#00ff00"/>
<rect x="799" y="333" width="1" height="7" fill="#000"/>
<rect x="803" y="329" width="1" height="42" fill="#00ff00"/>
<rect x="802" y="332" width="3" height="35" fill="#00ff00"/>
<rect x="803" y="333" width="1" height="33" fill="#fff"/>
<rect x="807" y="352" width="1" height="35" fill="#00ff00"/>
<rect x="806" y="365" width="3" height="3" fill="#00ff00"/>
<rect x="807" y="366" width="1" height="1" fill="#fff"/>
<rect x="811" y="351" width="1" height="29" fill="#00ff00"/>
<rect x="810" y="366" width="3" height="11" fill="#00ff00"/>
<rect x="811" y="367" width="1" height="9" fill="#fff"/>
<rect x="815" y="362" width="1" height="54" fill="#00ff00"/>
<rect x="814" y="375" width="3" height="19" fill="#00ff00"/>
<rect x="815" y="376" width="1" height="17" fill="#fff"/>
<rect x="819" y="376" width="1" height="22" fill="#00ff00"/>
<rect x="818" y="382" width="3" height="12" fill="#00ff00"/>
<rect x="819" y="383" width="1" height="10" fill="#000"/>
<rect x="823" y="345" width="1" height="41" fill="#00ff00"/>
<rect x="822" y="353" width="3" height="31" fill="#00ff00"/>
<rect x="823" y="354" width="1" height="29" fill="#000"/>
<rect x="827" y="333" width="1" height="27" fill="#00ff00"/>
<rect x="826" y="340" width="3" height="16" fill="#00ff00"/>
<rect x="827" y="341" width="1" height="14" fill="#000"/>
<rect x="831" y="327" width="1" height="41" fill="#00ff00"/>
<rect x="830" y="341" width="3" height="21" fill="#00ff00"/>
<rect x="831" y="342" width="1" height="19" fill="#fff"/>
<rect x="835" y="355" width="1" height="40" fill="#00ff00"/>
<rect x="834" y="360" width="3" height="21" fill="#00ff00"/>
<rect x="835" y="361" width="1" height="19" fill="#fff"/>
<rect x="839" y="374" width="1" height="54" fill="#00ff00"/>
<rect x="838" y="380" width="3" height="43" fill="#00ff00"/>
<rect x="839" y="381" width="1" height="41" fill="#fff"/>
<rect x="843" y="396" width="1" height="31" fill="#00ff00"/>
<rect x="842" y="403" width="3" height="19" fill="#00ff00"/>
<rect x="843" y="404" width="1" height="17" fill="#000"/>
<rect x="847" y="391" width="1" height="71" fill="#00ff00"/>
<rect x="846" y="403" width="3" height="56" fill="#00ff00"/>
<rect x="847" y="404" width="1" height="54" fill="#fff"/>
<rect x="851" y="446" width="1" height="38" fill="#00ff00"/>
<rect x="850" y="457" width="3" height="8" fill="#00ff00"/>
<rect x="851" y="458" width="1" height="6" fill="#fff"/>
<rect x="855" y="440" width="1" height="101" fill="#00ff00"/>
<rect x="854" y="462" width="3" height="71" fill="#00ff00"/>
<rect x="855" y="463" width="1" height="69" fill="#fff"/>
<rect x="859" y="521" width="1" height="33" fill="#00ff00"/>
<rect x="858" y="527" width="3" height="7" fill="#00ff00"/>
<rect x="859" y="528" width="1" height="5" fill="#000"/>
<rect x="863" y="503" width="1" height="38" fill="#00ff00"/>
<rect x="862" y="527" width="3" height="4" fill="#00ff00"/>
<rect x="863" y="528" width="1" height="2" fill="#fff"/>
<rect x="867" y="510" width="1" height="58" fill="#00ff00"/>
<rect x="866" y="530" width="3" height="31" fill="#00ff00"/>
<rect x="867" y="531" width="1" height="29" fill="#fff"/>
<rect x="871" y="514" width="1" height="58" fill="#00ff00"/>
<rect x="870" y="515" width="3" height="47" fill="#00ff00"/>
<rect x="871" y="516" width="1" height="45" fill="#000"/>
<rect x="875" y="512" width="1" height="26" fill="#00ff00"/>
<rect x="874" y="515" width="3" height="15" fill="#00ff00"/>
<rect x="875" y="516" width="1" height="13" fill="#fff"/>
<rect x="879" y="528" width="1" height="64" fill="#00ff00"/>
<rect x="878" y="528" width="3" height="47" fill="#00ff00"/>
<rect x="879" y="529" width="1" height="45" fill="#fff"/>
<rect x="883" y="558" width="1" height="40" fill="#00ff00"/>
<rect x="882" y="573" width="3" height="25" fill="#00ff00"/>
<rect x="883" y="574" width="1" height="23" fill="#fff"/>
<rect x="887" y="579" width="1" height="33" fill="#00ff00"/>
<rect x="886" y="590" width="3" height="8" fill="#00ff00"/>
<rect x="887" y="591" width="1" height="6" fill="#000"/>
<rect x="891" y="575" width="1" height="32" fill="#00ff00"/>
<rect x="890" y="590" width="3" height="5" fill="#00ff00"/>
<rect x="891" y="591" width="1" height="3" fill="#fff"/>
<rect x="895" y="594" width="1" height="16" fill="#00ff00"/>
<rect x="894" y="594" width="3" height="6" fill="#00ff00"/>
<rect x="895" y="595" width="1" height="4" fill="#fff"/>
<rect x="899" y="583" width="1" height="24" fill="#00ff00"/>
<rect x="898" y="599" width="3" height="1" fill="#00ff00"/>
<rect x="903" y="578" width="1" height="32" fill="#00ff00"/>
<rect x="902" y="599" width="3" height="12" fill="#00ff00"/>
<rect x="903" y="600" width="1" height="10" fill="#fff"/>
<rect x="907" y="591" width="1" height="24" fill="#00ff00"/>
<rect x="906" y="598" width="3" height="13" fill="#00ff00"/>
<rect x="907" y="599" width="1" height="11" fill="#000"/>
<rect x="911" y="596" width="1" height="19" fill="#00ff00"/>
<rect x="910" y="599" width="3" height="4" fill="#00ff00"/>
<rect x="911" y="600" width="1" height="2" fill="#fff"/>
<rect x="915" y="589" width="1" height="28" fill="#00ff00"/>
<rect x="914" y="596" width="3" height="7" fill="#00ff00"/>
<rect x="915" y="597" width="1" height="5" fill="#000"/>
<rect x="919" y="582" width="1" height="18" fill="#00ff00"/>
<rect x="918" y="584" width="3" height="14" fill="#00ff00"/>
<rect x="919" y="585" width="1" height="12" fill="#000"/>
<rect x="923" y="578" width="1" height="21" fill="#00ff00"/>
<rect x="922" y="579" width="3" height="6" fill="#00ff00"/>
<rect x="923" y="580" width="1" height="4" fill="#000"/>
<rect x="927" y="577" width="1" height="26" fill="#00ff00"/>
<rect x="926" y="579" width="3" height="23" fill="#00ff00"/>
<rect x="927" y="580" width="1" height="21" fill="#fff"/>
<rect x="931" y="574" width="1" height="41" fill="#00ff00"/>
<rect x="930" y="579" width="3" height="23" fill="#00ff00"/>
<rect x="931" y="580" width="1" height="21" fill="#000"/>
<rect x="935" y="563" width="1" height="23" fill="#00ff00"/>
<rect x="934" y="575" width="3" height="7" fill="#00ff00"/>
<rect x="935" y="576" width="1" height="5" fill="#000"/>
<rect x="939" y="567" width="1" height="12" fill="#00ff00"/>
<rect x="938" y="571" width="3" height="6" fill="#00ff00"/>
<rect x="939" y="572" width="1" height="4" fill="#000"/>
<rect x="943" y="568" width="1" height="18" fill="#00ff00"/>
<rect x="942" y="571" width="3" height="14" fill="#00ff00"/>
<rect x="943" y="572" width="1" height="12" fill="#fff"/>
<rect x="947" y="576" width="1" height="21" fill="#00ff00"/>
<rect x="946" y="583" width="3" height="10" fill="#00ff00"/>
<rect x="947" y="584" width="1" height="8" fill="#fff"/>
<rect x="951" y="573" width="1" height="19" fill="#00ff00"/>
<rect x="950" y="578" width="3" height="15" fill="#00ff00"/>
<rect x="951" y="579" width="1" height="13" fill="#000"/>
<rect x="955" y="566" width="1" height="13" fill="#00ff00"/>
<rect x="954" y="568" width="3" height="11" fill="#00ff00"/>
<rect x="955" y="569" width="1" height="9" fill="#000"/>
<rect x="959" y="567" width="1" height="17" fill="#00ff00"/>
<rect x="958" y="568" width="3" height="5" fill="#00ff00"/>
<rect x="959" y="569" width="1" height="3" fill="#fff"/>
<rect x="963" y="568" width="1" height="5" fill="#00ff00"/>
<rect x="962" y="570" width="3" height="4" fill="#00ff00"/>
<rect x="963" y="571" width="1" height="2" fill="#000"/>
<rect x="967" y="573" width="1" height="39" fill="#00ff00"/>
<rect x="966" y="579" width="3" height="26" fill="#00ff00"/>
<rect x="967" y="580" width="1" height="24" fill="#fff"/>
<rect x="971" y="583" width="1" height="23" fill="#00ff00"/>
<rect x="970" y="589" width="3" height="16" fill="#00ff00"/>
<rect x="971" y="590" width="1" height="14" fill="#000"/>
<rect x="975" y="578" width="1" height="15" fill="#00ff00"/>
<rect x="974" y="581" width="3" height="9" fill="#00ff00"/>
<rect x="975" y="582" width="1" height="7" fill="#000"/>
<rect x="979" y="574" width="1" height="24" fill="#00ff00"/>
<rect x="978" y="574" width="3" height="10" fill="#00ff00"/>
<rect x="979" y="575" width="1" height="8" fill="#000"/>
<rect x="983" y="554" width="1" height="26" fill="#00ff00"/>
<rect x="982" y="556" width="3" height="21" fill="#00ff00"/>
<rect x="983" y="557" width="1" height="19" fill="#000"/>
<rect x="987" y="546" width="1" height="22" fill="#00ff00"/>
<rect x="986" y="551" width="3" height="7" fill="#00ff00"/>
<rect x="987" y="552" width="1" height="5" fill="#000"/>
<rect x="991" y="548" width="1" height="11" fill="#00ff00"/>
<rect x="990" y="551" width="3" height="1" fill="#00ff00"/>
<rect x="995" y="547" width="1" height="8" fill="#00ff00"/>
<rect x="994" y="551" width="3" height="5" fill="#00ff00"/>
<rect x="995" y="552" width="1" height="3" fill="#fff"/>
<rect x="999" y="550" width="1" height="28" fill="#00ff00"/>
<rect x="998" y="554" width="3" height="1" fill="#00ff00"/>
<rect x="1003" y="544" width="1" height="21" fill="#00ff00"/>
<rect x="1002" y="552" width="3" height="5" fill="#00ff00"/>
<rect x="1003" y="553" width="1" height="3" fill="#fff"/>
<rect x="1007" y="550" width="1" height="15" fill="#00ff00"/>
<rect x="1006" y="553" width="3" height="4" fill="#00ff00"/>
<rect x="1007" y="554" width="1" height="2" fill="#000"/>
<rect x="1011" y="547" width="1" height="10" fill="#00ff00"/>
<rect x="1010" y="554" width="3" height="3" fill="#00ff00"/>
<rect x="1011" y="555" width="1" height="1" fill="#fff"/>
<rect x="1015" y="546" width="1" height="36" fill="#00ff00"/>
<rect x="1014" y="555" width="3" height="16" fill="#00ff00"/>
<rect x="1015" y="556" width="1" height="14" fill="#fff"/>
<rect x="1019" y="553" width="1" height="24" fill="#00ff00"/>
<rect x="1018" y="562" width="3" height="8" fill="#00ff00"/>
<rect x="1019" y="563" width="1" height="6" fill="#000"/>
<rect x="1023" y="556" width="1" height="12" fill="#00ff00"/>
<rect x="1022" y="561" width="3" height="6" fill="#00ff00"/>
<rect x="1023" y="562" width="1" height="4" fill="#fff"/>
<rect x="1027" y="551" width="1" height="30" fill="#00ff00"/>
<rect x="1026" y="555" width="3" height="12" fill="#00ff00"/>
<rect x="1027" y="556" width="1" height="10" fill="#000"/>
<rect x="1031" y="553" width="1" height="35" fill="#00ff00"/>
<rect x="1030" y="556" width="3" height="29" fill="#00ff00"/>
<rect x="1031" y="557" width="1" height="27" fill="#fff"/>
<rect x="1035" y="581" width="1" height="17" fill="#00ff00"/>
<rect x="1034" y="583" width="3" height="3" fill="#00ff00"/>
<rect x="1035" y="584" width="1" height="1" fill="#fff"/>
<rect x="1039" y="556" width="1" height="39" fill="#00ff00"/>
<rect x="1038" y="566" width="3" height="19" fill="#00ff00"/>
<rect x="1039" y="567" width="1" height="17" fill="#000"/>
<rect x="1043" y="558" width="1" height="19" fill="#00ff00"/>
<rect x="1042" y="566" width="3" height="1" fill="#00ff00"/>
<rect x="1047" y="563" width="1" height="16" fill="#00ff00"/>
<rect x="1046" y="566" width="3" height="1" fill="#00ff00"/>
<rect x="1051" y="551" width="1" height="20" fill="#00ff00"/>
<rect x="1050" y="564" width="3" height="6" fill="#00ff00"/>
<rect x="1051" y="565" width="1" height="4" fill="#000"/>
<rect x="1055" y="557" width="1" height="14" fill="#00ff00"/>
<rect x="1054" y="564" width="3" height="3" fill="#00ff00"/>
<rect x="1055" y="565" width="1" height="1" fill="#fff"/>
<rect x="1059" y="553" width="1" height="16" fill="#00ff00"/>
<rect x="1058" y="559" width="3" height="9" fill="#00ff00"/>
<rect x="1059" y="560" width="1" height="7" fill="#000"/>
<rect x="1063" y="552" width="1" height="19" fill="#00ff00"/>
<rect x="1062" y="559" width="3" height="12" fill="#00ff00"/>
<rect x="1063" y="560" width="1" height="10" fill="#fff"/>
<rect x="1067" y="560" width="1" height="12" fill="#00ff00"/>
<rect x="1066" y="569" width="3" height="3" fill="#00ff00"/>
<rect x="1067" y="570" width="1" height="1" fill="#fff"/>
<rect x="1071" y="559" width="1" height="16" fill="#00ff00"/>
<rect x="1070" y="559" width="3" height="11" fill="#00ff00"/>
<rect x="1071" y="560" width="1" height="9" fill="#000"/>
<rect x="1075" y="558" width="1" height="15" fill="#00ff00"/>
<rect x="1074" y="559" width="3" height="9" fill="#00ff00"/>
<rect x="1075" y="560" width="1" height="7" fill="#fff"/>
<rect x="1079" y="564" width="1" height="10" fill="#00ff00"/>
<rect x="1078" y="567" width="3" height="5" fill="#00ff00"/>
<rect x="1079" y="568" width="1" height="3" fill="#fff"/>
<rect x="1083" y="569" width="1" height="12" fill="#00ff00"/>
<rect x="1082" y="571" width="3" height="1" fill="#00ff00"/>
<rect x="1087" y="548" width="1" height="24" fill="#00ff00"/>
<rect x="1086" y="553" width="3" height="19" fill="#00ff00"/>
<rect x="1087" y="554" width="1" height="17" fill="#000"/>
<rect x="1091" y="539" width="1" height="16" fill="#00ff00"/>
<rect x="1090" y="540" width="3" height="15" fill="#00ff00"/>
<rect x="1091" y="541" width="1" height="13" fill="#000"/>
<rect x="1095" y="535" width="1" height="13" fill="#00ff00"/>
<rect x="1094" y="540" width="3" height="3" fill="#00ff00"/>
<rect x="1095" y="541" width="1" height="1" fill="#000"/>
<rect x="1099" y="531" width="1" height="12" fill="#00ff00"/>
<rect x="1098" y="533" width="3" height="7" fill="#00ff00"/>
<rect x="1099" y="534" width="1" height="5" fill="#000"/>
<rect x="1103" y="506" width="1" height="35" fill="#00ff00"/>
<rect x="1102" y="506" width="3" height="28" fill="#00ff00"/>
<rect x="1103" y="507" width="1" height="26" fill="#000"/>
<rect x="1107" y="499" width="1" height="22" fill="#00ff00"/>
<rect x="1106" y="507" width="3" height="1" fill="#00ff00"/>
<rect x="1111" y="499" width="1" height="26" fill="#00ff00"/>
<rect x="1110" y="505" width="3" height="4" fill="#00ff00"/>
<rect x="1111" y="506" width="1" height="2" fill="#000"/>
<rect x="1115" y="481" width="1" height="29" fill="#00ff00"/>
<rect x="1114" y="482" width="3" height="24" fill="#00ff00"/>
<rect x="1115" y="483" width="1" height="22" fill="#000"/>
<rect x="1119" y="443" width="1" height="42" fill="#00ff00"/>
<rect x="1118" y="447" width="3" height="36" fill="#00ff00"/>
<rect x="1119" y="448" width="1" height="34" fill="#000"/>
<rect x="1123" y="406" width="1" height="47" fill="#00ff00"/>
<rect x="1122" y="428" width="3" height="19" fill="#00ff00"/>
<rect x="1123" y="429" width="1" height="17" fill="#000"/>
<rect x="1127" y="406" width="1" height="32" fill="#00ff00"/>
<rect x="1126" y="413" width="3" height="16" fill="#00ff00"/>
<rect x="1127" y="414" width="1" height="14" fill="#000"/>
<rect x="1131" y="341" width="1" height="77" fill="#00ff00"/>
<rect x="1130" y="350" width="3" height="64" fill="#00ff00"/>
<rect x="1131" y="351" width="1" height="62" fill="#000"/>
<rect x="1135" y="344" width="1" height="40" fill="#00ff00"/>
<rect x="1134" y="350" width="3" height="30" fill="#00ff00"/>
<rect x="1135" y="351" width="1" height="28" fill="#fff"/>
<rect x="1139" y="371" width="1" height="33" fill="#00ff00"/>
<rect x="1138" y="371" width="3" height="9" fill="#00ff00"/>
<rect x="1139" y="372" width="1" height="7" fill="#000"/>
<rect x="1143" y="364" width="1" height="23" fill="#00ff00"/>
<rect x="1142" y="372" width="3" height="5" fill="#00ff00"/>
<rect x="1143" y="373" width="1" height="3" fill="#fff"/>
<rect x="1147" y="297" width="1" height="81" fill="#00ff00"/>
<rect x="1146" y="300" width="3" height="79" fill="#00ff00"/>
<rect x="1147" y="301" width="1" height="77" fill="#000"/>
<rect x="1151" y="280" width="1" height="39" fill="#00ff00"/>
<rect x="1150" y="294" width="3" height="25" fill="#00ff00"/>
<rect x="1151" y="295" width="1" height="23" fill="#fff"/>
<rect x="1155" y="265" width="1" height="55" fill="#00ff00"/>
<rect x="1154" y="271" width="3" height="48" fill="#00ff00"/>
<rect x="1155" y="272" width="1" height="46" fill="#000"/>
<rect x="1159" y="218" width="1" height="58" fill="#00ff00"/>
<rect x="1158" y="244" width="3" height="28" fill="#00ff00"/>
<rect x="1159" y="245" width="1" height="26" fill="#000"/>
<rect x="1163" y="217" width="1" height="44" fill="#00ff00"/>
<rect x="1162" y="244" width="3" height="3" fill="#00ff00"/>
<rect x="1163" y="245" width="1" height="1" fill="#fff"/>
<rect x="1167" y="235" width="1" height="29" fill="#00ff00"/>
<rect x="1166" y="246" width="3" height="12" fill="#00ff00"/>
<rect x="1167" y="247" width="1" height="10" fill="#fff"/>
<rect x="1171" y="251" width="1" height="42" fill="#00ff00"/>
<rect x="1170" y="258" width="3" height="19" fill="#00ff00"/>
<rect x="1171" y="259" width="1" height="17" fill="#fff"/>
<rect x="1175" y="232" width="1" height="44" fill="#00ff00"/>
<rect x="1174" y="266" width="3" height="11" fill="#00ff00"/>
<rect x="1175" y="267" width="1" height="9" fill="#000"/>
<rect x="1179" y="242" width="1" height="43" fill="#00ff00"/>
<rect x="1178" y="243" width="3" height="25" fill="#00ff00"/>
<rect x="1179" y="244" width="1" height="23" fill="#000"/>
<rect x="1183" y="207" width="1" height="37" fill="#00ff00"/>
<rect x="1182" y="211" width="3" height="34" fill="#00ff00"/>
<rect x="1183" y="212" width="1" height="32" fill="#000"/>
<rect x="1187" y="203" width="1" height="59" fill="#00ff00"/>
<rect x="1186" y="209" width="3" height="51" fill="#00ff00"/>
<rect x="1187" y="210" width="1" height="49" fill="#fff"/>
<rect x="1191" y="242" width="1" height="77" fill="#00ff00"/>
<rect x="1190" y="260" width="3" height="59" fill="#00ff00"/>
<rect x="1191" y="261" width="1" height="57" fill="#fff"/>
<rect x="1195" y="246" width="1" height="72" fill="#00ff00"/>
<rect x="1194" y="246" width="3" height="72" fill="#00ff00"/>
<rect x="1195" y="247" width="1" height="70" fill="#000"/>
<rect x="1199" y="209" width="1" height="53" fill="#00ff00"/>
<rect x="1198" y="213" width="3" height="38" fill="#00ff00"/>
<rect x="1199" y="214" width="1" height="36" fill="#000"/>
<rect x="1203" y="207" width="1" height="58" fill="#00ff00"/>
<rect x="1202" y="211" width="3" height="40" fill="#00ff00"/>
<rect x="1203" y="212" width="1" height="38" fill="#fff"/>
<rect x="1207" y="242" width="1" height="52" fill="#00ff00"/>
<rect x="1206" y="251" width="3" height="43" fill="#00ff00"/>
<rect x="1207" y="252" width="1" height="41" fill="#fff"/>
<rect x="1211" y="233" width="1" height="67" fill="#00ff00"/>
<rect x="1210" y="235" width="3" height="59" fill="#00ff00"/>
<rect x="1211" y="236" width="1" height="57" fill="#000"/>
<rect x="1215" y="219" width="1" height="73" fill="#00ff00"/>
<rect x="1214" y="234" width="3" height="3" fill="#00ff00"/>
<rect x="1215" y="235" width="1" height="1" fill="#fff"/>
<rect x="1219" y="217" width="1" height="20" fill="#00ff00"/>
<rect x="1218" y="218" width="3" height="17" fill="#00ff00"/>
<rect x="1219" y="219" width="1" height="15" fill="#000"/>
<rect x="1223" y="215" width="1" height="29" fill="#00ff00"/>
<rect x="1222" y="218" width="3" height="10" fill="#00ff00"/>
<rect x="1223" y="219" width="1" height="8" fill="#fff"/>
<rect x="1227" y="213" width="1" height="20" fill="#00ff00"/>
<rect x="1226" y="216" width="3" height="12" fill="#00ff00"/>
<rect x="1227" y="217" width="1" height="10" fill="#000"/>
<rect x="1231" y="203" width="1" height="18" fill="#00ff00"/>
<rect x="1230" y="207" width="3" height="10" fill="#00ff00"/>
<rect x="1231" y="208" width="1" height="8" fill="#000"/>
<rect x="1235" y="199" width="1" height="16" fill="#00ff00"/>
<rect x="1234" y="203" width="3" height="7" fill="#00ff00"/>
<rect x="1235" y="204" width="1" height="5" fill="#000"/>
<rect x="1239" y="199" width="1" height="18" fill="#00ff00"/>
<rect x="1238" y="203" width="3" height="9" fill="#00ff00"/>
<rect x="1239" y="204" width="1" height="7" fill="#fff"/>
<rect x="1243" y="203" width="1" height="16" fill="#00ff00"/>
<rect x="1242" y="209" width="3" height="7" fill="#00ff00"/>
<rect x="1243" y="210" width="1" height="5" fill="#fff"/>
<rect x="1247" y="209" width="1" height="12" fill="#00ff00"/>
<rect x="1246" y="215" width="3" height="4" fill="#00ff00"/>
<rect x="1247" y="216" width="1" height="2" fill="#fff"/>
<rect x="1251" y="211" width="1" height="61" fill="#00ff00"/>
<rect x="1250" y="217" width="3" height="50" fill="#00ff00"/>
<rect x="1251" y="218" width="1" height="48" fill="#fff"/>
<rect x="1255" y="235" width="1" height="45" fill="#00ff00"/>
<rect x="1254" y="252" width="3" height="13" fill="#00ff00"/>
<rect x="1255" y="253" width="1" height="11" fill="#000"/>
<rect x="1259" y="240" width="1" height="56" fill="#00ff00"/>
<rect x="1258" y="244" width="3" height="9" fill="#00ff00"/>
<rect x="1259" y="245" width="1" height="7" fill="#000"/>
<rect x="1263" y="211" width="1" height="46" fill="#00ff00"/>
<rect x="1262" y="215" width="3" height="31" fill="#00ff00"/>
<rect x="1263" y="216" width="1" height="29" fill="#000"/>
<rect x="1267" y="207" width="1" height="37" fill="#00ff00"/>
<rect x="1266" y="211" width="3" height="22" fill="#00ff00"/>
<rect x="1267" y="212" width="1" height="20" fill="#fff"/>
<rect x="1271" y="223" width="1" height="30" fill="#00ff00"/>
<rect x="1270" y="231" width="3" height="11" fill="#00ff00"/>
<rect x="1271" y="232" width="1" height="9" fill="#fff"/>
<rect x="1275" y="234" width="1" height="76" fill="#00ff00"/>
<rect x="1274" y="241" width="3" height="65" fill="#00ff00"/>
<rect x="1275" y="242" width="1" height="63" fill="#fff"/>
<rect x="1279" y="290" width="1" height="22" fill="#00ff00"/>
<rect x="1278" y="305" width="3" height="1" fill="#00ff00"/>
<rect x="1283" y="272" width="1" height="39" fill="#00ff00"/>
<rect x="1282" y="275" width="3" height="31" fill="#00ff00"/>
<rect x="1283" y="276" width="1" height="29" fill="#000"/>
<rect x="1287" y="271" width="1" height="32" fill="#00ff00"/>
<rect x="1286" y="275" width="3" height="26" fill="#00ff00"/>
<rect x="1287" y="276" width="1" height="24" fill="#fff"/>
<rect x="1291" y="273" width="1" height="31" fill="#00ff00"/>
<rect x="1290" y="282" width="3" height="19" fill="#00ff00"/>
<rect x="1291" y="283" width="1" height="17" fill="#000"/>
<rect x="1295" y="275" width="1" height="25" fill="#00ff00"/>
<rect x="1294" y="283" width="3" height="12" fill="#00ff00"/>
<rect x="1295" y="284" width="1" height="10" fill="#fff"/>
<rect x="1299" y="284" width="1" height="19" fill="#00ff00"/>
<rect x="1298" y="290" width="3" height="6" fill="#00ff00"/>
<rect x="1299" y="291" width="1" height="4" fill="#000"/>
<rect x="1303" y="284" width="1" height="15" fill="#00ff00"/>
<rect x="1302" y="287" width="3" height="5" fill="#00ff00"/>
<rect x="1303" y="288" width="1" height="3" fill="#000"/>
<rect x="1307" y="287" width="1" height="27" fill="#00ff00"/>
<rect x="1306" y="287" width="3" height="15" fill="#00ff00"/>
<rect x="1307" y="288" width="1" height="13" fill="#fff"/>
<rect x="1311" y="288" width="1" height="24" fill="#00ff00"/>
<rect x="1310" y="299" width="3" height="3" fill="#00ff00"/>
<rect x="1311" y="300" width="1" height="1" fill="#000"/>
<rect x="1315" y="280" width="1" height="26" fill="#00ff00"/>
<rect x="1314" y="284" width="3" height="16" fill="#00ff00"/>
<rect x="1315" y="285" width="1" height="14" fill="#000"/>
<rect x="1319" y="275" width="1" height="22" fill="#00ff00"/>
<rect x="1318" y="282" width="3" height="3" fill="#00ff00"/>
<rect x="1319" y="283" width="1" height="1" fill="#000"/>
<rect x="1323" y="282" width="1" height="19" fill="#00ff00"/>
<rect x="1322" y="284" width="3" height="1" fill="#00ff00"/>
<rect x="1327" y="284" width="1" height="30" fill="#00ff00"/>
<rect x="1326" y="284" width="3" height="24" fill="#00ff00"/>
<rect x="1327" y="285" width="1" height="22" fill="#fff"/>
<rect x="1331" y="298" width="1" height="15" fill="#00ff00"/>
<rect x="1330" y="300" width="3" height="8" fill="#00ff00"/>
<rect x="1331" y="301" width="1" height="6" fill="#000"/>
<rect x="1335" y="288" width="1" height="14" fill="#00ff00"/>
<rect x="1334" y="291" width="3" height="10" fill="#00ff00"/>
<rect x="1335" y="292" width="1" height="8" fill="#000"/>
<rect x="1339" y="285" width="1" height="11" fill="#00ff00"/>
<rect x="1338" y="286" width="3" height="6" fill="#00ff00"/>
<rect x="1339" y="287" width="1" height="4" fill="#000"/>
<rect x="1343" y="275" width="1" height="13" fill="#00ff00"/>
<rect x="1342" y="276" width="3" height="11" fill="#00ff00"/>
<rect x="1343" y="277" width="1" height="9" fill="#000"/>
<rect x="1347" y="271" width="1" height="8" fill="#00ff00"/>
<rect x="1346" y="271" width="3" height="6" fill="#00ff00"/>
<rect x="1347" y="272" width="1" height="4" fill="#000"/>
<rect x="1351" y="276" width="1" height="17" fill="#00ff00"/>
<rect x="1350" y="277" width="3" height="16" fill="#00ff00"/>
<rect x="1351" y="278" width="1" height="14" fill="#fff"/>
<rect x="1355" y="279" width="1" height="22" fill="#00ff00"/>
<rect x="1354" y="279" width="3" height="15" fill="#00ff00"/>
<rect x="1355" y="280" width="1" height="13" fill="#000"/>
<rect x="1359" y="275" width="1" height="17" fill="#00ff00"/>
<rect x="1358" y="276" width="3" height="5" fill="#00ff00"/>
<rect x="1359" y="277" width="1" height="3" fill="#000"/>
<rect x="1363" y="271" width="1" height="15" fill="#00ff00"/>
<rect x="1362" y="276" width="3" height="4" fill="#00ff00"/>
<rect x="1363" y="277" width="1" height="2" fill="#fff"/>
<rect x="1367" y="259" width="1" height="42" fill="#00ff00"/>
<rect x="1366" y="278" width="3" height="23" fill="#00ff00"/>
<rect x="1367" y="279" width="1" height="21" fill="#fff"/>
<rect x="1371" y="277" width="1" height="24" fill="#00ff00"/>
<rect x="1370" y="278" width="3" height="23" fill="#00ff00"/>
<rect x="1371" y="279" width="1" height="21" fill="#000"/>
<rect x="1375" y="273" width="1" height="12" fill="#00ff00"/>
<rect x="1374" y="278" width="3" height="7" fill="#00ff00"/>
<rect x="1375" y="279" width="1" height="5" fill="#fff"/>
<rect x="1379" y="280" width="1" height="12" fill="#00ff00"/>
<rect x="1378" y="281" width="3" height="4" fill="#00ff00"/>
<rect x="1379" y="282" width="1" height="2" fill="#000"/>
<rect x="1383" y="263" width="1" height="22" fill="#00ff00"/>
<rect x="1382" y="265" width="3" height="17" fill="#00ff00"/>
<rect x="1383" y="266" width="1" height="15" fill="#000"/>
<rect x="1387" y="252" width="1" height="19" fill="#00ff00"/>
<rect x="1386" y="263" width="3" height="3" fill="#00ff00"/>
<rect x="1387" y="264" width="1" height="1" fill="#000"/>
<rect x="1391" y="253" width="1" height="11" fill="#00ff00"/>
<rect x="1390" y="257" width="3" height="7" fill="#00ff00"/>
<rect x="1391" y="258" width="1" height="5" fill="#000"/>
<rect x="1395" y="250" width="1" height="10" fill="#00ff00"/>
<rect x="1394" y="256" width="3" height="3" fill="#00ff00"/>
<rect x="1395" y="257" width="1" height="1" fill="#000"/>
<rect x="1399" y="246" width="1" height="28" fill="#00ff00"/>
<rect x="1398" y="256" width="3" height="1" fill="#00ff00"/>
<rect x="1403" y="247" width="1" height="29" fill="#00ff00"/>
<rect x="1402" y="250" width="3" height="7" fill="#00ff00"/>
<rect x="1403" y="251" width="1" height="5" fill="#000"/>
<rect x="1407" y="249" width="1" height="23" fill="#00ff00"/>
<rect x="1406" y="250" width="3" height="16" fill="#00ff00"/>
<rect x="1407" y="251" width="1" height="14" fill="#fff"/>
<rect x="1411" y="253" width="1" height="19" fill="#00ff00"/>
<rect x="1410" y="253" width="3" height="14" fill="#00ff00"/>
<rect x="1411" y="254" width="1" height="12" fill="#000"/>
<rect x="1415" y="252" width="1" height="32" fill="#00ff00"/>
<rect x="1414" y="254" width="3" height="25" fill="#00ff00"/>
<rect x="1415" y="255" width="1" height="23" fill="#fff"/>
<rect x="1419" y="263" width="1" height="17" fill="#00ff00"/>
<rect x="1418" y="268" width="3" height="10" fill="#00ff00"/>
<rect x="1419" y="269" width="1" height="8" fill="#000"/>
<rect x="1423" y="238" width="1" height="36" fill="#00ff00"/>
<rect x="1422" y="255" width="3" height="14" fill="#00ff00"/>
<rect x="1423" y="256" width="1" height="12" fill="#000"/>
<rect x="1427" y="248" width="1" height="18" fill="#00ff00"/>
<rect x="1426" y="254" width="3" height="3" fill="#00ff00"/>
<rect x="1427" y="255" width="1" height="1" fill="#000"/>
<rect x="1431" y="239" width="1" height="28" fill="#00ff00"/>
<rect x="1430" y="241" width="3" height="14" fill="#00ff00"/>
<rect x="1431" y="242" width="1" height="12" fill="#000"/>
<rect x="1435" y="234" width="1" height="10" fill="#00ff00"/>
<rect x="1434" y="238" width="3" height="5" fill="#00ff00"/>
<rect x="1435" y="239" width="1" height="3" fill="#000"/>
<rect x="1439" y="220" width="1" height="20" fill="#00ff00"/>
<rect x="1438" y="224" width="3" height="16" fill="#00ff00"/>
<rect x="1439" y="225" width="1" height="14" fill="#000"/>
<rect x="1443" y="218" width="1" height="10" fill="#00ff00"/>
<rect x="1442" y="222" width="3" height="4" fill="#00ff00"/>
<rect x="1443" y="223" width="1" height="2" fill="#000"/>
<rect x="1447" y="217" width="1" height="13" fill="#00ff00"/>
<rect x="1446" y="221" width="3" height="3" fill="#00ff00"/>
<rect x="1447" y="222" width="1" height="1" fill="#000"/>
<rect x="1451" y="218" width="1" height="19" fill="#00ff00"/>
<rect x="1450" y="221" width="3" height="16" fill="#00ff00"/>
<rect x="1451" y="222" width="1" height="14" fill="#fff"/>
<rect x="1455" y="225" width="1" height="13" fill="#00ff00"/>
<rect x="1454" y="235" width="3" height="3" fill="#00ff00"/>
<rect x="1455" y="236" width="1" height="1" fill="#fff"/>
<rect x="1459" y="235" width="1" height="20" fill="#00ff00"/>
<rect x="1458" y="235" width="3" height="21" fill="#00ff00"/>
<rect x="1459" y="236" width="1" height="19" fill="#fff"/>
<rect x="1463" y="240" width="1" height="15" fill="#00ff00"/>
<rect x="1462" y="243" width="3" height="13" fill="#00ff00"/>
<rect x="1463" y="244" width="1" height="11" fill="#000"/>
<rect x="1467" y="216" width="1" height="28" fill="#00ff00"/>
<rect x="1466" y="222" width="3" height="22" fill="#00ff00"/>
<rect x="1467" y="223" width="1" height="20" fill="#000"/>
<rect x="1471" y="213" width="1" height="15" fill="#00ff00"/>
<rect x="1470" y="221" width="3" height="3" fill="#00ff00"/>
<rect x="1471" y="222" width="1" height="1" fill="#000"/>
<rect x="1475" y="215" width="1" height="17" fill="#00ff00"/>
<rect x="1474" y="221" width="3" height="11" fill="#00ff00"/>
<rect x="1475" y="222" width="1" height="9" fill="#fff"/>
<rect x="1479" y="214" width="1" height="22" fill="#00ff00"/>
<rect x="1478" y="216" width="3" height="16" fill="#00ff00"/>
<rect x="1479" y="217" width="1" height="14" fill="#000"/>
<rect x="1483" y="206" width="1" height="20" fill="#00ff00"/>
<rect x="1482" y="206" width="3" height="12" fill="#00ff00"/>
<rect x="1483" y="207" width="1" height="10" fill="#000"/>
<rect x="1487" y="189" width="1" height="20" fill="#00ff00"/>
<rect x="1486" y="191" width="3" height="16" fill="#00ff00"/>
<rect x="1487" y="192" width="1" height="14" fill="#000"/>
<rect x="1491" y="175" width="1" height="34" fill="#00ff00"/>
<rect x="1490" y="190" width="3" height="3" fill="#00ff00"/>
<rect x="1491" y="191" width="1" height="1" fill="#fff"/>
<rect x="1495" y="191" width="1" height="20" fill="#00ff00"/>
<rect x="1494" y="193" width="3" height="16" fill="#00ff00"/>
<rect x="1495" y="194" width="1" height="14" fill="#fff"/>
<rect x="1499" y="195" width="1" height="24" fill="#00ff00"/>
<rect x="1498" y="208" width="3" height="4" fill="#00ff00"/>
<rect x="1499" y="209" width="1" height="2" fill="#fff"/>
<rect x="1503" y="197" width="1" height="43" fill="#00ff00"/>
<rect x="1502" y="211" width="3" height="1" fill="#00ff00"/>
<rect x="1507" y="183" width="1" height="47" fill="#00ff00"/>
<rect x="1506" y="209" width="3" height="3" fill="#00ff00"/>
<rect x="1507" y="210" width="1" height="1" fill="#000"/>
<rect x="1511" y="206" width="1" height="58" fill="#00ff00"/>
<rect x="1510" y="209" width="3" height="38" fill="#00ff00"/>
<rect x="1511" y="210" width="1" height="36" fill="#fff"/>
<rect x="1515" y="241" width="1" height="39" fill="#00ff00"/>
<rect x="1514" y="247" width="3" height="29" fill="#00ff00"/>
<rect x="1515" y="248" width="1" height="27" fill="#fff"/>
<rect x="1519" y="221" width="1" height="58" fill="#00ff00"/>
<rect x="1518" y="227" width="3" height="48" fill="#00ff00"/>
<rect x="1519" y="228" width="1" height="46" fill="#000"/>
<rect x="1523" y="197" width="1" height="45" fill="#00ff00"/>
<rect x="1522" y="227" width="3" height="10" fill="#00ff00"/>
<rect x="1523" y="228" width="1" height="8" fill="#fff"/>
<rect x="1527" y="230" width="1" height="44" fill="#00ff00"/>
<rect x="1526" y="236" width="3" height="8" fill="#00ff00"/>
<rect x="1527" y="237" width="1" height="6" fill="#fff"/>
<rect x="1531" y="228" width="1" height="29" fill="#00ff00"/>
<rect x="1530" y="231" width="3" height="13" fill="#00ff00"/>
<rect x="1531" y="232" width="1" height="11" fill="#000"/>
<rect x="1535" y="193" width="1" height="43" fill="#00ff00"/>
<rect x="1534" y="217" width="3" height="15" fill="#00ff00"/>
<rect x="1535" y="218" width="1" height="13" fill="#000"/>
<rect x="1539" y="208" width="1" height="31" fill="#00ff00"/>
<rect x="1538" y="217" width="3" height="6" fill="#00ff00"/>
<rect x="1539" y="218" width="1" height="4" fill="#fff"/>
<rect x="1543" y="215" width="1" height="31" fill="#00ff00"/>
<rect x="1542" y="223" width="3" height="1" fill="#00ff00"/>
<rect x="1547" y="210" width="1" height="38" fill="#00ff00"/>
<rect x="1546" y="223" width="3" height="25" fill="#00ff00"/>
<rect x="1547" y="224" width="1" height="23" fill="#fff"/>
<rect x="1551" y="243" width="1" height="33" fill="#00ff00"/>
<rect x="1550" y="247" width="3" height="28" fill="#00ff00"/>
<rect x="1551" y="248" width="1" height="26" fill="#fff"/>
<rect x="1555" y="270" width="1" height="37" fill="#00ff00"/>
<rect x="1554" y="274" width="3" height="16" fill="#00ff00"/>
<rect x="1555" y="275" width="1" height="14" fill="#fff"/>
<rect x="1559" y="280" width="1" height="24" fill="#00ff00"/>
<rect x="1558" y="289" width="3" height="2" fill="#00ff00"/>
<rect x="1563" y="265" width="1" height="35" fill="#00ff00"/>
<rect x="1562" y="287" width="3" height="4" fill="#00ff00"/>
<rect x="1563" y="288" width="1" height="2" fill="#000"/>
<rect x="1567" y="265" width="1" height="31" fill="#00ff00"/>
<rect x="1566" y="274" width="3" height="16" fill="#00ff00"/>
<rect x="1567" y="275" width="1" height="14" fill="#000"/>
<rect x="1571" y="246" width="1" height="34" fill="#00ff00"/>
<rect x="1570" y="259" width="3" height="17" fill="#00ff00"/>
<rect x="1571" y="260" width="1" height="15" fill="#000"/>
<rect x="1575" y="236" width="1" height="24" fill="#00ff00"/>
<rect x="1574" y="259" width="3" height="1" fill="#00ff00"/>
<rect x="1579" y="250" width="1" height="50" fill="#00ff00"/>
<rect x="1578" y="259" width="3" height="39" fill="#00ff00"/>
<rect x="1579" y="260" width="1" height="37" fill="#fff"/>
<rect x="1583" y="267" width="1" height="40" fill="#00ff00"/>
<rect x="1582" y="298" width="3" height="9" fill="#00ff00"/>
<rect x="1583" y="299" width="1" height="7" fill="#fff"/>
<rect x="1587" y="294" width="1" height="27" fill="#00ff00"/>
<rect x="1586" y="303" width="3" height="3" fill="#00ff00"/>
<rect x="1587" y="304" width="1" height="1" fill="#fff"/>
<rect x="1591" y="267" width="1" height="43" fill="#00ff00"/>
<rect x="1590" y="275" width="3" height="30" fill="#00ff00"/>
<rect x="1591" y="276" width="1" height="28" fill="#000"/>
<rect x="1595" y="243" width="1" height="34" fill="#00ff00"/>
<rect x="1594" y="251" width="3" height="26" fill="#00ff00"/>
<rect x="1595" y="252" width="1" height="24" fill="#000"/>
<rect x="1599" y="261" width="1" height="197" fill="#00ff00"/>
<rect x="1598" y="269" width="3" height="178" fill="#00ff00"/>
<rect x="1599" y="270" width="1" height="176" fill="#fff"/>
<rect x="1603" y="379" width="1" height="90" fill="#00ff00"/>
<rect x="1602" y="403" width="3" height="44" fill="#00ff00"/>
<rect x="1603" y="404" width="1" height="42" fill="#000"/>
<rect x="1607" y="347" width="1" height="91" fill="#00ff00"/>
<rect x="1606" y="403" width="3" height="28" fill="#00ff00"/>
<rect x="1607" y="404" width="1" height="26" fill="#fff"/>
<rect x="1611" y="415" width="1" height="53" fill="#00ff00"/>
<rect x="1610" y="430" width="3" height="29" fill="#00ff00"/>
<rect x="1611" y="431" width="1" height="27" fill="#fff"/>
<rect x="1615" y="430" width="1" height="55" fill="#00ff00"/>
<rect x="1614" y="436" width="3" height="40" fill="#00ff00"/>
<rect x="1615" y="437" width="1" height="38" fill="#fff"/>
<rect x="1619" y="435" width="1" height="58" fill="#00ff00"/>
<rect x="1618" y="435" width="3" height="41" fill="#00ff00"/>
<rect x="1619" y="436" width="1" height="39" fill="#000"/>
<rect x="1623" y="367" width="1" height="69" fill="#00ff00"/>
<rect x="1622" y="369" width="3" height="67" fill="#00ff00"/>
<rect x="1623" y="370" width="1" height="65" fill="#000"/>
<rect x="1627" y="354" width="1" height="55" fill="#00ff00"/>
<rect x="1626" y="369" width="3" height="36" fill="#00ff00"/>
<rect x="1627" y="370" width="1" height="34" fill="#fff"/>
<rect x="1631" y="363" width="1" height="47" fill="#00ff00"/>
<rect x="1630" y="404" width="3" height="2" fill="#00ff00"/>
<rect x="1635" y="385" width="1" height="51" fill="#00ff00"/>
<rect x="1634" y="405" width="3" height="7" fill="#00ff00"/>
<rect x="1635" y="406" width="1" height="5" fill="#fff"/>
<rect x="1639" y="381" width="1" height="50" fill="#00ff00"/>
<rect x="1638" y="387" width="3" height="23" fill="#00ff00"/>
<rect x="1639" y="388" width="1" height="21" fill="#000"/>
<rect x="1643" y="339" width="1" height="53" fill="#00ff00"/>
<rect x="1642" y="342" width="3" height="47" fill="#00ff00"/>
<rect x="1643" y="343" width="1" height="45" fill="#000"/>
<rect x="1647" y="338" width="1" height="27" fill="#00ff00"/>
<rect x="1646" y="341" width="3" height="23" fill="#00ff00"/>
<rect x="1647" y="342" width="1" height="21" fill="#fff"/>
<rect x="1651" y="356" width="1" height="34" fill="#00ff00"/>
<rect x="1650" y="361" width="3" height="29" fill="#00ff00"/>
<rect x="1651" y="362" width="1" height="27" fill="#fff"/>
<rect x="1655" y="367" width="1" height="32" fill="#00ff00"/>
<rect x="1654" y="387" width="3" height="12" fill="#00ff00"/>
<rect x="1655" y="388" width="1" height="10" fill="#fff"/>
<rect x="1659" y="382" width="1" height="25" fill="#00ff00"/>
<rect x="1658" y="396" width="3" height="5" fill="#00ff00"/>
<rect x="1659" y="397" width="1" height="3" fill="#fff"/>
<rect x="1663" y="395" width="1" height="14" fill="#00ff00"/>
<rect x="1662" y="398" width="3" height="3" fill="#00ff00"/>
<rect x="1663" y="399" width="1" height="1" fill="#000"/>
<rect x="1667" y="395" width="1" height="31" fill="#00ff00"/>
<rect x="1666" y="398" width="3" height="23" fill="#00ff00"/>
<rect x="1667" y="399" width="1" height="21" fill="#fff"/>
<rect x="1671" y="402" width="1" height="31" fill="#00ff00"/>
<rect x="1670" y="402" width="3" height="19" fill="#00ff00"/>
<rect x="1671" y="403" width="1" height="17" fill="#000"/>
<rect x="1675" y="371" width="1" height="32" fill="#00ff00"/>
<rect x="1674" y="372" width="3" height="31" fill="#00ff00"/>
<rect x="1675" y="373" width="1" height="29" fill="#000"/>
<rect x="1679" y="353" width="1" height="23" fill="#00ff00"/>
<rect x="1678" y="356" width="3" height="19" fill="#00ff00"/>
<rect x="1679" y="357" width="1" height="17" fill="#000"/>
<rect x="1683" y="347" width="1" height="19" fill="#00ff00"/>
<rect x="1682" y="357" width="3" height="1" fill="#00ff00"/>
<rect x="1687" y="356" width="1" height="19" fill="#00ff00"/>
<rect x="1686" y="357" width="3" height="12" fill="#00ff00"/>
<rect x="1687" y="358" width="1" height="10" fill="#fff"/>
<rect x="1691" y="348" width="1" height="23" fill="#00ff00"/>
<rect x="1690" y="349" width="3" height="20" fill="#00ff00"/>
<rect x="1691" y="350" width="1" height="18" fill="#000"/>
<rect x="1695" y="342" width="1" height="13" fill="#00ff00"/>
<rect x="1694" y="350" width="3" height="2" fill="#00ff00"/>
<rect x="1699" y="335" width="1" height="17" fill="#00ff00"/>
<rect x="1698" y="337" width="3" height="14" fill="#00ff00"/>
<rect x="1699" y="338" width="1" height="12" fill="#000"/>
<rect x="1703" y="325" width="1" height="21" fill="#00ff00"/>
<rect x="1702" y="337" width="3" height="3" fill="#00ff00"/>
<rect x="1703" y="338" width="1" height="1" fill="#000"/>
<rect x="1707" y="325" width="1" height="16" fill="#00ff00"/>
<rect x="1706" y="330" width="3" height="8" fill="#00ff00"/>
<rect x="1707" y="331" width="1" height="6" fill="#000"/>
<rect x="1711" y="327" width="1" height="27" fill="#00ff00"/>
<rect x="1710" y="330" width="3" height="22" fill="#00ff00"/>
<rect x="1711" y="331" width="1" height="20" fill="#fff"/>
<rect x="1715" y="345" width="1" height="12" fill="#00ff00"/>
<rect x="1714" y="350" width="3" height="2" fill="#00ff00"/>
<rect x="1719" y="327" width="1" height="27" fill="#00ff00"/>
<rect x="1718" y="331" width="3" height="20" fill="#00ff00"/>
<rect x="1719" y="332" width="1" height="18" fill="#000"/>
<rect x="1723" y="327" width="1" height="17" fill="#00ff00"/>
<rect x="1722" y="331" width="3" height="6" fill="#00ff00"/>
<rect x="1723" y="332" width="1" height="4" fill="#fff"/>
<rect x="1727" y="330" width="1" height="8" fill="#00ff00"/>
<rect x="1726" y="332" width="3" height="5" fill="#00ff00"/>
<rect x="1727" y="333" width="1" height="3" fill="#000"/>
<rect x="1731" y="330" width="1" height="5" fill="#00ff00"/>
<rect x="1730" y="332" width="3" height="1" fill="#00ff00"/>
<rect x="1735" y="338" width="1" height="26" fill="#00ff00"/>
<rect x="1734" y="338" width="3" height="4" fill="#00ff00"/>
<rect x="1735" y="339" width="1" height="2" fill="#fff"/>
<rect x="1739" y="342" width="1" height="1" fill="#00ff00"/>
<rect x="1738" y="343" width="3" height="1" fill="#00ff00"/>
<rect x="1743" y="340" width="1" height="4" fill="#00ff00"/>
<rect x="1742" y="341" width="3" height="1" fill="#00ff00"/>
<rect x="1747" y="340" width="1" height="26" fill="#00ff00"/>
<rect x="1746" y="341" width="3" height="24" fill="#00ff00"/>
<rect x="1747" y="342" width="1" height="22" fill="#fff"/>
<rect x="1751" y="330" width="1" height="34" fill="#00ff00"/>
<rect x="1750" y="335" width="3" height="30" fill="#00ff00"/>
<rect x="1751" y="336" width="1" height="28" fill="#000"/>
<rect x="1755" y="328" width="1" height="13" fill="#00ff00"/>
<rect x="1754" y="330" width="3" height="6" fill="#00ff00"/>
<rect x="1755" y="331" width="1" height="4" fill="#000"/>
<rect x="1759" y="330" width="1" height="11" fill="#00ff00"/>
<rect x="1758" y="331" width="3" height="11" fill="#00ff00"/>
<rect x="1759" y="332" width="1" height="9" fill="#fff"/>
<rect x="1763" y="337" width="1" height="4" fill="#00ff00"/>
<rect x="1762" y="340" width="3" height="2" fill="#00ff00"/>
<rect x="1767" y="324" width="1" height="16" fill="#00ff00"/>
<rect x="1766" y="328" width="3" height="13" fill="#00ff00"/>
<rect x="1767" y="329" width="1" height="11" fill="#000"/>
<rect x="1771" y="327" width="1" height="11" fill="#00ff00"/>
<rect x="1770" y="329" width="3" height="10" fill="#00ff00"/>
<rect x="1771" y="330" width="1" height="8" fill="#fff"/>
<rect x="1775" y="316" width="1" height="23" fill="#00ff00"/>
<rect x="1774" y="320" width="3" height="18" fill="#00ff00"/>
<rect x="1775" y="321" width="1" height="16" fill="#000"/>
<rect x="1779" y="306" width="1" height="17" fill="#00ff00"/>
<rect x="1778" y="317" width="3" height="6" fill="#00ff00"/>
<rect x="1779" y="318" width="1" height="4" fill="#000"/>
<rect x="1783" y="306" width="1" height="18" fill="#00ff00"/>
<rect x="1782" y="307" width="3" height="12" fill="#00ff00"/>
<rect x="1783" y="308" width="1" height="10" fill="#000"/>
<rect x="1787" y="299" width="1" height="16" fill="#00ff00"/>
<rect x="1786" y="301" width="3" height="8" fill="#00ff00"/>
<rect x="1787" y="302" width="1" height="6" fill="#000"/>
<rect x="1791" y="299" width="1" height="22" fill="#00ff00"/>
<rect x="1790" y="301" width="3" height="15" fill="#00ff00"/>
<rect x="1791" y="302" width="1" height="13" fill="#fff"/>
<rect x="1795" y="282" width="1" height="34" fill="#00ff00"/>
<rect x="1794" y="303" width="3" height="13" fill="#00ff00"/>
<rect x="1795" y="304" width="1" height="11" fill="#000"/>
<rect x="1799" y="303" width="1" height="9" fill="#00ff00"/>
<rect x="1798" y="303" width="3" height="4" fill="#00ff00"/>
<rect x="1799" y="304" width="1" height="2" fill="#fff"/>
<rect x="1803" y="304" width="1" height="13" fill="#00ff00"/>
<rect x="1802" y="305" width="3" height="9" fill="#00ff00"/>
<rect x="1803" y="306" width="1" height="7" fill="#fff"/>
<rect x="1807" y="303" width="1" height="25" fill="#00ff00"/>
<rect x="1806" y="309" width="3" height="5" fill="#00ff00"/>
<rect x="1807" y="310" width="1" height="3" fill="#000"/>
<rect x="1811" y="309" width="1" height="37" fill="#00ff00"/>
<rect x="1810" y="310" width="3" height="31" fill="#00ff00"/>
<rect x="1811" y="311" width="1" height="29" fill="#fff"/>
<rect x="1815" y="337" width="1" height="37" fill="#00ff00"/>
<rect x="1814" y="339" width="3" height="30" fill="#00ff00"/>
<rect x="1815" y="340" width="1" height="28" fill="#fff"/>
<rect x="1819" y="355" width="1" height="14" fill="#00ff00"/>
<rect x="1818" y="358" width="3" height="11" fill="#00ff00"/>
<rect x="1819" y="359" width="1" height="9" fill="#000"/>
<rect x="1823" y="358" width="1" height="21" fill="#00ff00"/>
<rect x="1822" y="359" width="3" height="20" fill="#00ff00"/>
<rect x="1823" y="360" width="1" height="18" fill="#fff"/>
<rect x="1827" y="370" width="1" height="18" fill="#00ff00"/>
<rect x="1826" y="377" width="3" height="5" fill="#00ff00"/>
<rect x="1827" y="378" width="1" height="3" fill="#fff"/>
<rect x="1831" y="371" width="1" height="22" fill="#00ff00"/>
<rect x="1830" y="381" width="3" height="12" fill="#00ff00"/>
<rect x="1831" y="382" width="1" height="10" fill="#fff"/>
<rect x="1835" y="364" width="1" height="39" fill="#00ff00"/>
<rect x="1834" y="377" width="3" height="16" fill="#00ff00"/>
<rect x="1835" y="378" width="1" height="14" fill="#000"/>
<rect x="1839" y="363" width="1" height="15" fill="#00ff00"/>
<rect x="1838" y="372" width="3" height="5" fill="#00ff00"/>
<rect x="1839" y="373" width="1" height="3" fill="#000"/>
<rect x="1843" y="365" width="1" height="10" fill="#00ff00"/>
<rect x="1842" y="372" width="3" height="1" fill="#00ff00"/>
<rect x="1847" y="360" width="1" height="52" fill="#00ff00"/>
<rect x="1846" y="371" width="3" height="41" fill="#00ff00"/>
<rect x="1847" y="372" width="1" height="39" fill="#fff"/>
<rect x="1851" y="401" width="1" height="20" fill="#00ff00"/>
<rect x="1850" y="410" width="3" height="2" fill="#00ff00"/>
<rect x="1855" y="400" width="1" height="14" fill="#00ff00"/>
<rect x="1854" y="406" width="3" height="5" fill="#00ff00"/>
<rect x="1855" y="407" width="1" height="3" fill="#000"/>
<rect x="1868" y="32" width="2" height="1" fill="#fff"/>
<rect x="1868" y="65" width="2" height="1" fill="#fff"/>
<rect x="1868" y="99" width="2" height="1" fill="#fff"/>
<rect x="1868" y="132" width="2" height="1" fill="#fff"/>
<rect x="1868" y="165" width="2" height="1" fill="#fff"/>
<rect x="1868" y="199" width="2" height="1" fill="#fff"/>
<rect x="1868" y="232" width="2" height="1" fill="#fff"/>
<rect x="1868" y="265" width="2" height="1" fill="#fff"/>
<rect x="1868" y="299" width="2" height="1" fill="#fff"/>
<rect x="1868" y="332" width="2" height="1" fill="#fff"/>
<rect x="1868" y="365" width="2" height="1" fill="#fff"/>
<rect x="1868" y="399" width="2" height="1" fill="#fff"/>
<rect x="1868" y="432" width="2" height="1" fill="#fff"/>
<rect x="1868" y="465" width="2" height="1" fill="#fff"/>
<rect x="1868" y="499" width="2" height="1" fill="#fff"/>
<rect x="1868" y="532" width="2" height="1" fill="#fff"/>
<rect x="1868" y="565" width="2" height="1" fill="#fff"/>
<rect x="1868" y="599" width="2" height="1" fill="#fff"/>
<rect x="1868" y="632" width="2" height="1" fill="#fff"/>
<rect x="187" y="636" width="1" height="3" fill="#fff"/>
<rect x="251" y="636" width="1" height="3" fill="#fff"/>
<rect x="315" y="636" width="1" height="3" fill="#fff"/>
<rect x="379" y="636" width="1" height="3" fill="#fff"/>
<rect x="443" y="636" width="1" height="3" fill="#fff"/>
<rect x="507" y="636" width="1" height="3" fill="#fff"/>
<rect x="571" y="636" width="1" height="3" fill="#fff"/>
<rect x="635" y="636" width="1" height="3" fill="#fff"/>
<rect x="699" y="636" width="1" height="3" fill="#fff"/>
<rect x="763" y="636" width="1" height="3" fill="#fff"/>
<rect x="827" y="636" width="1" height="3" fill="#fff"/>
<rect x="891" y="636" width="1" height="3" fill="#fff"/>
<rect x="955" y="636" width="1" height="3" fill="#fff"/>
<rect x="1019" y="636" width="1" height="3" fill="#fff"/>
<rect x="1083" y="636" width="1" height="3" fill="#fff"/>
<rect x="1147" y="636" width="1" height="3" fill="#fff"/>
<rect x="1211" y="636" width="1" height="3" fill="#fff"/>
<rect x="1275" y="636" width="1" height="3" fill="#fff"/>
<rect x="1339" y="636" width="1" height="3" fill="#fff"/>
<rect x="1403" y="636" width="1" height="3" fill="#fff"/>
<rect x="1467" y="636" width="1" height="3" fill="#fff"/>
<rect x="1531" y="636" width="1" height="3" fill="#fff"/>
<rect x="1595" y="636" width="1" height="3" fill="#fff"/>
<rect x="1659" y="636" width="1" height="3" fill="#fff"/>
<rect x="1723" y="636" width="1" height="3" fill="#fff"/>
<rect x="1787" y="636" width="1" height="3" fill="#fff"/>
<rect x="1851" y="636" width="1" height="3" fill="#fff"/>
</svg>
<div class="t" style="top:28.12px;font-size:10px;color:#fff;letter-spacing:-0.378px;left:1873.00px;">1.10955</div>
<div class="t" style="top:61.45px;font-size:10px;color:#fff;letter-spacing:-0.378px;left:1873.00px;">1.10880</div>
<div class="t" style="top:94.78px;font-size:10px;color:#fff;letter-spacing:-0.378px;left:1873.00px;">1.10805</div>
<div class="t" style="top:128.11px;font-size:10px;color:#fff;letter-spacing:-0.378px;left:1873.00px;">1.10730</div>
<div class="t" style="top:161.45px;font-size:10px;color:#fff;letter-spacing:-0.378px;left:1873.00px;">1.10655</div>
<div class="t" style="top:194.78px;font-size:10px;color:#fff;letter-spacing:-0.378px;left:1873.00px;">1.10580</div>
<div class="t" style="top:228.11px;font-size:10px;color:#fff;letter-spacing:-0.378px;left:1873.00px;">1.10505</div>
<div class="t" style="top:261.45px;font-size:10px;color:#fff;letter-spacing:-0.378px;left:1873.00px;">1.10430</div>
<div class="t" style="top:294.78px;font-size:10px;color:#fff;letter-spacing:-0.378px;left:1873.00px;">1.10355</div>
<div class="t" style="top:328.11px;font-size:10px;color:#fff;letter-spacing:-0.378px;left:1873.00px;">1.10280</div>
<div class="t" style="top:361.44px;font-size:10px;color:#fff;letter-spacing:-0.378px;left:1873.00px;">1.10205</div>
<div class="t" style="top:394.78px;font-size:10px;color:#fff;letter-spacing:-0.378px;left:1873.00px;">1.10130</div>
<div class="t" style="top:428.11px;font-size:10px;color:#fff;letter-spacing:-0.378px;left:1873.00px;">1.10055</div>
<div class="t" style="top:461.44px;font-size:10px;color:#fff;letter-spacing:-0.378px;left:1873.00px;">1.09980</div>
<div class="t" style="top:494.78px;font-size:10px;color:#fff;letter-spacing:-0.378px;left:1873.00px;">1.09905</div>
<div class="t" style="top:528.11px;font-size:10px;color:#fff;letter-spacing:-0.378px;left:1873.00px;">1.09830</div>
<div class="t" style="top:561.44px;font-size:10px;color:#fff;letter-spacing:-0.378px;left:1873.00px;">1.09755</div>
<div class="t" style="top:594.78px;font-size:10px;color:#fff;letter-spacing:-0.378px;left:1873.00px;">1.09680</div>
<div class="t" style="top:628.11px;font-size:10px;color:#fff;letter-spacing:-0.378px;left:1873.00px;">1.09605</div>
<div class="r" style="left:1869px;top:401px;width:40px;height:11px;background:#fff;"></div>
<div class="t" style="top:401.62px;font-size:10px;color:#000;letter-spacing:-0.272px;left:1873.00px;">1.10115</div>
<div class="t" style="top:640.11px;font-size:9.7px;color:#fff;letter-spacing:-0.138px;left:185.50px;">21 Apr 2023</div>
<div class="t" style="top:640.11px;font-size:9.7px;color:#fff;left:249.50px;">24 Apr 03:15</div>
<div class="t" style="top:640.11px;font-size:9.7px;color:#fff;left:313.50px;">24 Apr 07:15</div>
<div class="t" style="top:640.11px;font-size:9.7px;color:#fff;letter-spacing:0.059px;left:377.50px;">24 Apr 11:15</div>
<div class="t" style="top:640.11px;font-size:9.7px;color:#fff;left:441.50px;">24 Apr 15:15</div>
<div class="t" style="top:640.11px;font-size:9.7px;color:#fff;left:505.50px;">24 Apr 19:15</div>
<div class="t" style="top:640.11px;font-size:9.7px;color:#fff;left:569.50px;">24 Apr 23:15</div>
<div class="t" style="top:640.11px;font-size:9.7px;color:#fff;left:633.50px;">25 Apr 03:15</div>
<div class="t" style="top:640.11px;font-size:9.7px;color:#fff;left:697.50px;">25 Apr 07:15</div>
<div class="t" style="top:640.11px;font-size:9.7px;color:#fff;letter-spacing:0.059px;left:761.50px;">25 Apr 11:15</div>
<div class="t" style="top:640.11px;font-size:9.7px;color:#fff;left:825.50px;">25 Apr 15:15</div>
<div class="t" style="top:640.11px;font-size:9.7px;color:#fff;left:889.50px;">25 Apr 19:15</div>
<div class="t" style="top:640.11px;font-size:9.7px;color:#fff;left:953.50px;">25 Apr 23:15</div>
<div class="t" style="top:640.11px;font-size:9.7px;color:#fff;left:1017.50px;">26 Apr 03:15</div>
<div class="t" style="top:640.11px;font-size:9.7px;color:#fff;left:1081.50px;">26 Apr 07:15</div>
<div class="t" style="top:640.11px;font-size:9.7px;color:#fff;letter-spacing:0.059px;left:1145.50px;">26 Apr 11:15</div>
<div class="t" style="top:640.11px;font-size:9.7px;color:#fff;left:1209.50px;">26 Apr 15:15</div>
<div class="t" style="top:640.11px;font-size:9.7px;color:#fff;left:1273.50px;">26 Apr 19:15</div>
<div class="t" style="top:640.11px;font-size:9.7px;color:#fff;left:1337.50px;">26 Apr 23:15</div>
<div class="t" style="top:640.11px;font-size:9.7px;color:#fff;left:1401.50px;">27 Apr 03:15</div>
<div class="t" style="top:640.11px;font-size:9.7px;color:#fff;left:1465.50px;">27 Apr 07:15</div>
<div class="t" style="top:640.11px;font-size:9.7px;color:#fff;letter-spacing:0.059px;left:1529.50px;">27 Apr 11:15</div>
<div class="t" style="top:640.11px;font-size:9.7px;color:#fff;left:1593.50px;">27 Apr 15:15</div>
<div class="t" style="top:640.11px;font-size:9.7px;color:#fff;left:1657.50px;">27 Apr 19:15</div>
<div class="t" style="top:640.11px;font-size:9.7px;color:#fff;left:1721.50px;">27 Apr 23:15</div>
<div class="t" style="top:640.11px;font-size:9.7px;color:#fff;left:1785.50px;">28 Apr 03:15</div>
<div class="t" style="top:640.11px;font-size:9.7px;color:#fff;left:1849.50px;">28 Apr 07:15</div>
<svg style="left:190px;top:9px" width="7" height="4" viewBox="0 0 7 4" shape-rendering="crispEdges"><rect x="0" y="0" width="7" height="1" fill="#fff"/><rect x="1" y="1" width="5" height="1" fill="#fff"/><rect x="2" y="2" width="3" height="1" fill="#fff"/><rect x="3" y="3" width="1" height="1" fill="#fff"/></svg>
<div class="t" style="top:5.52px;font-size:10.2px;color:#fff;letter-spacing:-0.525px;left:202.00px;">EURUSD,M15</div>
<div class="t" style="top:7.11px;font-size:9.6px;color:#fff;letter-spacing:-0.410px;left:1826.50px;">Patas</div>
<svg style="left:1850px;top:6px" width="13" height="13" viewBox="0 0 13 13"><circle cx="6.5" cy="6.5" r="5.3" fill="none" stroke="#fff" stroke-width="1.300"/><rect x="4" y="4" width="1.5" height="2" fill="#fff"/><rect x="7.500" y="4" width="1.500" height="2" fill="#fff"/><path d="M3.800 7.800 q2.700 2.800 5.400 0" stroke="#fff" fill="none" stroke-width="1"/></svg>
<svg style="left:0;top:0" width="1909" height="656" viewBox="0 0 1909 656">
<defs><pattern id="rd" width="2" height="2" patternUnits="userSpaceOnUse"><rect width="2" height="2" fill="#fff"/><rect width="1" height="1" fill="#ff0000"/></pattern></defs>
<rect x="1599" y="226" width="1" height="37" fill="#808080"/>
<path d="M1599 198 l5 -4.500 v9z" fill="#daa520" stroke="#fff" stroke-width="1.300" paint-order="stroke"/>
<path d="M1599 206 l5 -4.500 v9z" fill="#daa520" stroke="#fff" stroke-width="1.300" paint-order="stroke"/>
<path d="M1599 214 l5 -4.500 v9z" fill="#daa520" stroke="#fff" stroke-width="1.300" paint-order="stroke"/>
<path d="M1599 222 l5 -4.500 v9z" fill="#daa520" stroke="#fff" stroke-width="1.300" paint-order="stroke"/>
<path d="M1593 185.5 h3.500 v-2.500 l4 4 l-4 4 v-2.500 h-3.500z" fill="#4169e1" stroke="#fff" stroke-width="1.800" paint-order="stroke" stroke-linejoin="miter"/>
<path d="M1593 192 h3.500 v-2.500 l4 4 l-4 4 v-2.500 h-3.500z" fill="#4169e1" stroke="#fff" stroke-width="1.800" paint-order="stroke" stroke-linejoin="miter"/>
<path d="M1593 198.5 h3.500 v-2.500 l4 4 l-4 4 v-2.500 h-3.500z" fill="#4169e1" stroke="#fff" stroke-width="1.800" paint-order="stroke" stroke-linejoin="miter"/>
<path d="M1593 205.5 h3.500 v-2.500 l4 4 l-4 4 v-2.500 h-3.500z" fill="#4169e1" stroke="#fff" stroke-width="1.800" paint-order="stroke" stroke-linejoin="miter"/>
<path d="M1593 213 h3.500 v-2.500 l4 4 l-4 4 v-2.500 h-3.500z" fill="#4169e1" stroke="#fff" stroke-width="1.800" paint-order="stroke" stroke-linejoin="miter"/>
<path d="M1599 264.5 l5 -4.500 v9z" fill="#daa520" stroke="#fff" stroke-width="1.300" paint-order="stroke"/>
<path d="M1599 272.5 l5 -4.500 v9z" fill="#ee82ee" stroke="#fff" stroke-width="1.300" paint-order="stroke"/>
<path d="M1599 280.5 l5 -4.500 v9z" fill="#ee82ee" stroke="#fff" stroke-width="1.300" paint-order="stroke"/>
<path d="M1599 288.5 l5 -4.500 v9z" fill="#ee82ee" stroke="#fff" stroke-width="1.300" paint-order="stroke"/>
<path d="M1599 296.5 l5 -4.500 v9z" fill="#ee82ee" stroke="#fff" stroke-width="1.300" paint-order="stroke"/>
<path d="M1599 304.5 l5 -4.500 v9z" fill="#ee82ee" stroke="#fff" stroke-width="1.300" paint-order="stroke"/>
<path d="M1599 312.5 l5 -4.500 v9z" fill="#ee82ee" stroke="#fff" stroke-width="1.300" paint-order="stroke"/>
<path d="M1599 320.5 l5 -4.500 v9z" fill="#ee82ee" stroke="#fff" stroke-width="1.300" paint-order="stroke"/>
<path d="M1599 328.5 l5 -4.500 v9z" fill="#ee82ee" stroke="#fff" stroke-width="1.300" paint-order="stroke"/>
<path d="M1599 336.5 l5 -4.500 v9z" fill="#ee82ee" stroke="#fff" stroke-width="1.300" paint-order="stroke"/>
<path d="M1599 344.5 l5 -4.500 v9z" fill="#ee82ee" stroke="#fff" stroke-width="1.300" paint-order="stroke"/>
<path d="M1599 352.5 l5 -4.500 v9z" fill="#ee82ee" stroke="#fff" stroke-width="1.300" paint-order="stroke"/>
<path d="M1599 360.5 l5 -4.500 v9z" fill="#ee82ee" stroke="#fff" stroke-width="1.300" paint-order="stroke"/>
<path d="M1599 368.5 l5 -4.500 v9z" fill="#ee82ee" stroke="#fff" stroke-width="1.300" paint-order="stroke"/>
<path d="M1599 376.5 l5 -4.500 v9z" fill="#ee82ee" stroke="#fff" stroke-width="1.300" paint-order="stroke"/>
<path d="M1599 384.5 l5 -4.500 v9z" fill="#ee82ee" stroke="#fff" stroke-width="1.300" paint-order="stroke"/>
<path d="M1599 392.5 l5 -4.500 v9z" fill="#ee82ee" stroke="#fff" stroke-width="1.300" paint-order="stroke"/>
<path d="M1599 400.5 l5 -4.500 v9z" fill="#ee82ee" stroke="#fff" stroke-width="1.300" paint-order="stroke"/>
<rect x="1593" y="284" width="6.500" height="152" fill="#fff"/>
<path d="M1593 279.5 h3.500 v-2.500 l4 4 l-4 4 v-2.500 h-3.500z" fill="#4169e1" stroke="#fff" stroke-width="1.800" paint-order="stroke" stroke-linejoin="miter"/>
<path d="M1593 287 h3.500 v-2.500 l4 4 l-4 4 v-2.500 h-3.500z" fill="#ff0000" stroke="#fff" stroke-width="1.800" paint-order="stroke" stroke-linejoin="miter"/>
<path d="M1593 296 h3.500 v-2.500 l4 4 l-4 4 v-2.500 h-3.500z" fill="#ff0000" stroke="#fff" stroke-width="1.800" paint-order="stroke" stroke-linejoin="miter"/>
<path d="M1593 305 h3.500 v-2.500 l4 4 l-4 4 v-2.500 h-3.500z" fill="#ff0000" stroke="#fff" stroke-width="1.800" paint-order="stroke" stroke-linejoin="miter"/>
<path d="M1593 314 h3.500 v-2.500 l4 4 l-4 4 v-2.500 h-3.500z" fill="#ff0000" stroke="#fff" stroke-width="1.800" paint-order="stroke" stroke-linejoin="miter"/>
<path d="M1593 323 h3.500 v-2.500 l4 4 l-4 4 v-2.500 h-3.500z" fill="#ff0000" stroke="#fff" stroke-width="1.800" paint-order="stroke" stroke-linejoin="miter"/>
<path d="M1593 332 h3.500 v-2.500 l4 4 l-4 4 v-2.500 h-3.500z" fill="#ff0000" stroke="#fff" stroke-width="1.800" paint-order="stroke" stroke-linejoin="miter"/>
<path d="M1593 341 h3.500 v-2.500 l4 4 l-4 4 v-2.500 h-3.500z" fill="#ff0000" stroke="#fff" stroke-width="1.800" paint-order="stroke" stroke-linejoin="miter"/>
<path d="M1593 350 h3.500 v-2.500 l4 4 l-4 4 v-2.500 h-3.500z" fill="#ff0000" stroke="#fff" stroke-width="1.800" paint-order="stroke" stroke-linejoin="miter"/>
<path d="M1593 359 h3.500 v-2.500 l4 4 l-4 4 v-2.500 h-3.500z" fill="#ff0000" stroke="#fff" stroke-width="1.800" paint-order="stroke" stroke-linejoin="miter"/>
<path d="M1593 368 h3.500 v-2.500 l4 4 l-4 4 v-2.500 h-3.500z" fill="#ff0000" stroke="#fff" stroke-width="1.800" paint-order="stroke" stroke-linejoin="miter"/>
<rect x="1593" y="376" width="6" height="60" fill="url(#rd)" shape-rendering="crispEdges"/>
<path d="M1593 405.5 h3.500 v-2.500 l4 4 l-4 4 v-2.500 h-3.500z" fill="#ff0000" stroke="#fff" stroke-width="1.800" paint-order="stroke" stroke-linejoin="miter"/>
<path d="M1593 426.5 h3.500 v-2.500 l4 4 l-4 4 v-2.500 h-3.500z" fill="#ff0000" stroke="#fff" stroke-width="1.800" paint-order="stroke" stroke-linejoin="miter"/>
<path d="M1597 410 H1607 V440 L1608 468 L1603 474 L1597 468Z" fill="url(#rd)" shape-rendering="crispEdges"/>
<path d="M1606 392 l5 -4.500 v9z" fill="#ee82ee" stroke="#fff" stroke-width="1.300" paint-order="stroke"/>
<path d="M1606 400 l5 -4.500 v9z" fill="#ee82ee" stroke="#fff" stroke-width="1.300" paint-order="stroke"/>
<path d="M1602 408 l5 -4.500 v9z" fill="#ee82ee" stroke="#fff" stroke-width="1.300" paint-order="stroke"/>
<path d="M1603 416 l5 -4.500 v9z" fill="#ee82ee" stroke="#fff" stroke-width="1.300" paint-order="stroke"/>
<path d="M1604 426 l5 -4.500 v9z" fill="#ee82ee" stroke="#fff" stroke-width="1.300" paint-order="stroke"/>
<path d="M1605 436 l5 -4.500 v9z" fill="#ee82ee" stroke="#fff" stroke-width="1.300" paint-order="stroke"/>
<path d="M1606 446 l5 -4.500 v9z" fill="#ee82ee" stroke="#fff" stroke-width="1.300" paint-order="stroke"/>
<path d="M1606 455 l5 -4.500 v9z" fill="#ee82ee" stroke="#fff" stroke-width="1.300" paint-order="stroke"/>
<path d="M1599 412.5 h3.500 v-2.500 l4 4 l-4 4 v-2.500 h-3.500z" fill="#ff0000" stroke="#fff" stroke-width="1.800" paint-order="stroke" stroke-linejoin="miter"/>
<path d="M1597.5 430.5 h3.500 v-2.500 l4 4 l-4 4 v-2.500 h-3.500z" fill="#ff0000" stroke="#fff" stroke-width="1.800" paint-order="stroke" stroke-linejoin="miter"/>
<path d="M1600 445.5 h3.500 v-2.500 l4 4 l-4 4 v-2.500 h-3.500z" fill="#ff0000" stroke="#fff" stroke-width="1.800" paint-order="stroke" stroke-linejoin="miter"/>
<path d="M1599.5 454.5 h3.500 v-2.500 l4 4 l-4 4 v-2.500 h-3.500z" fill="#ff0000" stroke="#fff" stroke-width="1.800" paint-order="stroke" stroke-linejoin="miter"/>
<path d="M1600 467.5 h3.500 v-2.500 l4 4 l-4 4 v-2.500 h-3.500z" fill="#ff0000" stroke="#fff" stroke-width="1.800" paint-order="stroke" stroke-linejoin="miter"/>
<rect x="1613" y="386" width="7" height="30" fill="url(#rd)" shape-rendering="crispEdges"/>
<path d="M1620 393 l5 -4.500 v9z" fill="#ee82ee" stroke="#fff" stroke-width="1.300" paint-order="stroke"/>
<path d="M1621 402 l5 -4.500 v9z" fill="#ee82ee" stroke="#fff" stroke-width="1.300" paint-order="stroke"/>
<path d="M1622 411 l5 -4.500 v9z" fill="#ee82ee" stroke="#fff" stroke-width="1.300" paint-order="stroke"/>
<path d="M1619 420 l5 -4.500 v9z" fill="#ee82ee" stroke="#fff" stroke-width="1.300" paint-order="stroke"/>
<path d="M1618.5 429 l5 -4.500 v9z" fill="#ee82ee" stroke="#fff" stroke-width="1.300" paint-order="stroke"/>
<path d="M1613 386 h3.500 v-2.500 l4 4 l-4 4 v-2.500 h-3.500z" fill="#ff0000" stroke="#fff" stroke-width="1.800" paint-order="stroke" stroke-linejoin="miter"/>
<path d="M1616 392 h3.500 v-2.500 l4 4 l-4 4 v-2.500 h-3.500z" fill="#ff0000" stroke="#fff" stroke-width="1.800" paint-order="stroke" stroke-linejoin="miter"/>
<path d="M1613 399.5 h3.500 v-2.500 l4 4 l-4 4 v-2.500 h-3.500z" fill="#ff0000" stroke="#fff" stroke-width="1.800" paint-order="stroke" stroke-linejoin="miter"/>
<path d="M1613 430.5 h3.500 v-2.500 l4 4 l-4 4 v-2.500 h-3.500z" fill="#ff0000" stroke="#fff" stroke-width="1.800" paint-order="stroke" stroke-linejoin="miter"/>
<path d="M1141.5 271.5 h3 v-2.500 l4 3.500 l-4 3.500 v-2.500 h-3z" fill="#000" stroke="#fff" stroke-width="1.500"/>
<path d="M1141.5 278 h3 v-2.500 l4 3.500 l-4 3.500 v-2.500 h-3z" fill="#000" stroke="#fff" stroke-width="1.500"/>
<path d="M1141.5 285 h3 v-2.500 l4 3.500 l-4 3.500 v-2.500 h-3z" fill="#000" stroke="#fff" stroke-width="1.500"/>
<path d="M1148 290.5 l5 -4.500 v9z" fill="#000" stroke="#fff" stroke-width="1.500"/>
<path d="M1151 290.5 l5 -4.500 v9z" fill="#000" stroke="#fff" stroke-width="1.500"/>
<path d="M1146.5 299 l5 -4.500 v9z" fill="#000" stroke="#fff" stroke-width="1.500"/>
<path d="M1182 267.5 h3 v-2.500 l4 3.500 l-4 3.500 v-2.500 h-3z" fill="#000" stroke="#fff" stroke-width="1.500"/>
<path d="M1184.5 271.5 h3 v-2.500 l4 3.500 l-4 3.500 v-2.500 h-3z" fill="#000" stroke="#fff" stroke-width="1.500"/>
<path d="M1190.5 254.5 l5 -4.500 v9z" fill="#000" stroke="#fff" stroke-width="1.500"/>
<path d="M1187 259 l5 -4.500 v9z" fill="#000" stroke="#fff" stroke-width="1.500"/>
</svg>
<div class="r" style="left:282px;top:3px;width:1101px;height:214px;background:#252b35;"></div>
<div class="r" style="left:282px;top:3px;width:1101px;height:39.5px;background:#1c1c1c;"></div>
<div class="r" style="left:282px;top:202.5px;width:1101px;height:14px;background:#1c1c1c;"></div>
<div class="r" style="left:282px;top:3px;width:1px;height:214px;background:#8e9db5;"></div>
<div class="r" style="left:1382px;top:3px;width:1px;height:214px;background:#8e9db5;"></div>
<div class="r" style="left:282px;top:216px;width:1101px;height:1px;background:#8e9db5;"></div>
<div class="r" style="left:186px;top:2px;width:1682px;height:1px;background:#fff;"></div>
<div class="r" style="left:265px;top:2.5px;width:16px;height:13.5px;border:1px solid #8fa0b8;border-radius:2.5px;background:#232933;box-sizing:border-box;overflow:hidden"></div>
<div class="t" style="top:4.09px;font-size:10.67px;color:#dde2ea;left:266.50px;">£-</div>
<div class="r" style="left:265px;top:26px;width:16px;height:13.5px;border:1px solid #8fa0b8;border-radius:2.5px;background:#232933;box-sizing:border-box;overflow:hidden"></div>
<div class="t" style="top:27.59px;font-size:10.67px;color:#dde2ea;left:265.50px;">)Æ</div>
<div class="r" style="left:265px;top:46.3px;width:16px;height:13.5px;border:1px solid #8fa0b8;border-radius:2.5px;background:#232933;box-sizing:border-box;overflow:hidden"></div>
<div class="t" style="top:47.89px;font-size:10.67px;color:#dde2ea;left:270.00px;">?</div>
<div class="r" style="left:265px;top:66.3px;width:16px;height:13.5px;border:1px solid #8fa0b8;border-radius:2.5px;background:#232933;box-sizing:border-box;overflow:hidden"></div>
<div class="t" style="top:67.89px;font-size:10.67px;color:#dde2ea;left:270.00px;">¡l</div>
<div class="t" style="left:279.500px;top:97px;font-size:10.700px;color:#f2f200;transform-origin:0 0;transform:rotate(90deg);letter-spacing:0.100px">V 5.15</div>
<div class="t" style="top:6.79px;font-size:10.67px;color:#f2f200;letter-spacing:-0.213px;left:287.50px;">MTCommanderÍ³¼Æ</div>
<div class="t" style="top:6.79px;font-size:10.67px;color:#62a8f0;letter-spacing:0.015px;right:537.49px;">¸´ÂíîÀ http://MTCommander.com</div>
<div class="r" style="left:318.7px;top:26px;width:18.3px;height:16.5px;background:#252b35;border-radius:2px"></div>
<div class="r" style="left:583px;top:26px;width:33px;height:16.5px;background:#252b35;border-radius:2px"></div>
<div class="t" style="top:28.79px;font-size:10.67px;color:#5d646e;letter-spacing:-0.468px;left:298.50px;">×Ü</div>
<div class="t" style="top:28.79px;font-size:10.67px;color:#d4d8e0;letter-spacing:-0.458px;left:320.50px;">ÈÕ</div>
<div class="t" style="top:28.79px;font-size:10.67px;color:#5d646e;letter-spacing:-1.252px;left:343.00px;">ÖÜ</div>
<div class="t" style="top:28.79px;font-size:10.67px;color:#5d646e;letter-spacing:-0.208px;left:364.50px;">ÔÂ</div>
<div class="t" style="top:28.79px;font-size:10.67px;color:#5d646e;letter-spacing:-0.899px;left:387.00px;">¼¾</div>
<div class="t" style="top:28.79px;font-size:10.67px;color:#5d646e;letter-spacing:0.724px;left:409.00px;">Äê</div>
<div class="t" style="top:28.79px;font-size:10.67px;color:#5d646e;letter-spacing:-0.078px;left:430.50px;">±Ò</div>
<div class="t" style="top:28.79px;font-size:10.67px;color:#5d646e;left:455.00px;">M</div>
<div class="t" style="top:28.79px;font-size:10.67px;color:#5d646e;letter-spacing:0.795px;left:475.50px;">±¸</div>
<div class="t" style="top:28.79px;font-size:10.67px;color:#5d646e;letter-spacing:-0.071px;left:499.50px;">ÕË»§</div>
<div class="t" style="top:28.79px;font-size:10.67px;color:#d4d8e0;letter-spacing:0.287px;left:588.00px;">¹ì¼£</div>
<div class="r" style="left:295px;top:47px;width:1px;height:97px;background:#7c828c;"></div>
<div class="r" style="left:295px;top:143px;width:1076px;height:1px;background:#7c828c;"></div>
<svg style="left:0;top:0" width="1909" height="220" viewBox="0 0 1909 220" shape-rendering="crispEdges"><rect x="295" y="46" width="18" height="1" fill="#00c4ff"/><rect x="313" y="46" width="36" height="2" fill="#00c4ff"/><rect x="349" y="47" width="36" height="2" fill="#00c4ff"/><rect x="385" y="48" width="36" height="2" fill="#00c4ff"/><rect x="421" y="49" width="36" height="2" fill="#00c4ff"/><rect x="457" y="50" width="36" height="2" fill="#00c4ff"/><rect x="493" y="51" width="36" height="2" fill="#00c4ff"/><rect x="529" y="52" width="36" height="2" fill="#00c4ff"/><rect x="565" y="53" width="36" height="2" fill="#00c4ff"/><rect x="601" y="54" width="36" height="2" fill="#00c4ff"/><rect x="637" y="55" width="36" height="2" fill="#00c4ff"/><rect x="673" y="56" width="36" height="2" fill="#00c4ff"/><rect x="709" y="57" width="36" height="2" fill="#00c4ff"/><rect x="745" y="58" width="36" height="2" fill="#00c4ff"/><rect x="781" y="59" width="36" height="2" fill="#00c4ff"/><rect x="817" y="60" width="20" height="2" fill="#00c4ff"/><rect x="837" y="61" width="7" height="2" fill="#00c4ff"/><rect x="844" y="62" width="6" height="2" fill="#00c4ff"/><rect x="850" y="63" width="6" height="2" fill="#00c4ff"/><rect x="856" y="64" width="7" height="2" fill="#00c4ff"/><rect x="863" y="65" width="7" height="2" fill="#00c4ff"/><rect x="870" y="66" width="6" height="2" fill="#00c4ff"/><rect x="876" y="67" width="6" height="2" fill="#00c4ff"/><rect x="882" y="68" width="7" height="2" fill="#00c4ff"/><rect x="889" y="69" width="7" height="2" fill="#00c4ff"/><rect x="896" y="70" width="6" height="2" fill="#00c4ff"/><rect x="902" y="71" width="6" height="2" fill="#00c4ff"/><rect x="908" y="72" width="7" height="2" fill="#00c4ff"/><rect x="915" y="73" width="7" height="2" fill="#00c4ff"/><rect x="922" y="74" width="6" height="2" fill="#00c4ff"/><rect x="928" y="75" width="6" height="2" fill="#00c4ff"/><rect x="934" y="76" width="7" height="2" fill="#00c4ff"/><rect x="941" y="77" width="7" height="2" fill="#00c4ff"/><rect x="948" y="78" width="6" height="2" fill="#00c4ff"/><rect x="954" y="79" width="6" height="2" fill="#00c4ff"/><rect x="960" y="80" width="7" height="2" fill="#00c4ff"/><rect x="967" y="81" width="7" height="2" fill="#00c4ff"/><rect x="974" y="82" width="6" height="2" fill="#00c4ff"/><rect x="980" y="83" width="6" height="2" fill="#00c4ff"/><rect x="986" y="84" width="7" height="2" fill="#00c4ff"/><rect x="993" y="85" width="7" height="2" fill="#00c4ff"/><rect x="1000" y="86" width="6" height="2" fill="#00c4ff"/><rect x="1006" y="87" width="6" height="2" fill="#00c4ff"/><rect x="1012" y="88" width="7" height="2" fill="#00c4ff"/><rect x="1019" y="89" width="7" height="2" fill="#00c4ff"/><rect x="1026" y="90" width="6" height="2" fill="#00c4ff"/><rect x="1032" y="91" width="6" height="2" fill="#00c4ff"/><rect x="1038" y="92" width="7" height="2" fill="#00c4ff"/><rect x="1045" y="93" width="7" height="2" fill="#00c4ff"/><rect x="1052" y="94" width="6" height="2" fill="#00c4ff"/><rect x="1058" y="95" width="6" height="2" fill="#00c4ff"/><rect x="1064" y="96" width="7" height="2" fill="#00c4ff"/><rect x="1071" y="97" width="7" height="2" fill="#00c4ff"/><rect x="1078" y="98" width="6" height="2" fill="#00c4ff"/><rect x="1084" y="99" width="6" height="2" fill="#00c4ff"/><rect x="1090" y="100" width="7" height="2" fill="#00c4ff"/><rect x="1097" y="101" width="7" height="2" fill="#00c4ff"/><rect x="1104" y="102" width="6" height="2" fill="#00c4ff"/><rect x="1110" y="103" width="6" height="2" fill="#00c4ff"/><rect x="1116" y="104" width="7" height="2" fill="#00c4ff"/><rect x="1123" y="105" width="7" height="2" fill="#00c4ff"/><rect x="1130" y="106" width="6" height="2" fill="#00c4ff"/><rect x="1136" y="107" width="6" height="2" fill="#00c4ff"/><rect x="1142" y="108" width="7" height="2" fill="#00c4ff"/><rect x="1149" y="109" width="7" height="2" fill="#00c4ff"/><rect x="1156" y="110" width="6" height="2" fill="#00c4ff"/><rect x="1162" y="111" width="6" height="2" fill="#00c4ff"/><rect x="1168" y="112" width="7" height="2" fill="#00c4ff"/><rect x="1175" y="113" width="7" height="2" fill="#00c4ff"/><rect x="1182" y="114" width="6" height="2" fill="#00c4ff"/><rect x="1188" y="115" width="6" height="2" fill="#00c4ff"/><rect x="1194" y="116" width="7" height="2" fill="#00c4ff"/><rect x="1201" y="117" width="7" height="2" fill="#00c4ff"/><rect x="1208" y="118" width="6" height="2" fill="#00c4ff"/><rect x="1214" y="119" width="6" height="2" fill="#00c4ff"/><rect x="1220" y="120" width="7" height="2" fill="#00c4ff"/><rect x="1227" y="121" width="7" height="2" fill="#00c4ff"/><rect x="1234" y="122" width="6" height="2" fill="#00c4ff"/><rect x="1240" y="123" width="6" height="2" fill="#00c4ff"/><rect x="1246" y="124" width="7" height="2" fill="#00c4ff"/><rect x="1253" y="125" width="7" height="2" fill="#00c4ff"/><rect x="1260" y="126" width="6" height="2" fill="#00c4ff"/><rect x="1266" y="127" width="6" height="2" fill="#00c4ff"/><rect x="1272" y="128" width="7" height="2" fill="#00c4ff"/><rect x="1279" y="129" width="7" height="2" fill="#00c4ff"/><rect x="1286" y="130" width="6" height="2" fill="#00c4ff"/><rect x="1292" y="131" width="6" height="2" fill="#00c4ff"/><rect x="1298" y="132" width="7" height="2" fill="#00c4ff"/><rect x="1305" y="133" width="7" height="2" fill="#00c4ff"/><rect x="1312" y="134" width="6" height="2" fill="#00c4ff"/><rect x="1318" y="135" width="6" height="2" fill="#00c4ff"/><rect x="1324" y="136" width="7" height="2" fill="#00c4ff"/><rect x="1331" y="137" width="7" height="2" fill="#00c4ff"/><rect x="1338" y="138" width="6" height="2" fill="#00c4ff"/><rect x="1344" y="139" width="6" height="2" fill="#00c4ff"/><rect x="1350" y="140" width="7" height="2" fill="#00c4ff"/><rect x="1357" y="141" width="7" height="2" fill="#00c4ff"/><rect x="1364" y="142" width="6" height="2" fill="#00c4ff"/></svg>
<svg style="left:1377px;top:39px" width="6" height="9" viewBox="0 0 6 9"><path d="M5.500 0.500 V8.500 L0.500 4.500Z" fill="#b8bcc4"/></svg>
<div class="t" style="top:146.01px;font-size:9.4px;color:#8a919c;letter-spacing:-0.205px;left:788.50px;">2023.04.26</div>
<div class="t" style="top:146.01px;font-size:9.4px;color:#8a919c;letter-spacing:-0.205px;right:538.70px;">2023.04.27</div>
<div class="t" style="top:161.79px;font-size:10.67px;color:#d6dae2;letter-spacing:-0.448px;left:288.00px;">ÈÕÆÚ</div>
<div class="t" style="top:161.79px;font-size:10.67px;color:#d6dae2;letter-spacing:-0.468px;left:368.50px;">×ÜÊÖÊý</div>
<div class="t" style="top:161.79px;font-size:10.67px;color:#d6dae2;letter-spacing:-1.060px;left:418.50px;">×îÐ¡|×î´óÊÖÊý</div>
<div class="t" style="top:161.79px;font-size:10.67px;color:#d6dae2;letter-spacing:-0.118px;left:488.50px;">´ÎÊý</div>
<div class="t" style="top:161.79px;font-size:10.67px;color:#d6dae2;letter-spacing:0.238px;left:518.50px;">Ó¯¿÷½ð¶î</div>
<div class="t" style="top:161.79px;font-size:10.67px;color:#d6dae2;letter-spacing:-0.184px;left:598.50px;">°Ù·Ö±È%</div>
<div class="t" style="top:161.79px;font-size:10.67px;color:#d6dae2;letter-spacing:0.105px;left:658.50px;">³õÈë½ð</div>
<div class="t" style="top:161.79px;font-size:10.67px;color:#d6dae2;letter-spacing:0.393px;left:718.00px;">Óà¶î</div>
<div class="t" style="top:161.79px;font-size:10.67px;color:#d6dae2;letter-spacing:-0.058px;left:798.50px;">×î´ó¸¡¿÷½ð¶î</div>
<div class="t" style="top:161.79px;font-size:10.67px;color:#d6dae2;letter-spacing:-0.132px;left:878.50px;">×î´ó¸¡¿÷±ÈÀý</div>
<div class="t" style="top:161.79px;font-size:10.67px;color:#d6dae2;letter-spacing:-0.126px;left:958.50px;">×î´ó¸¡Ó¯½ð¶î</div>
<div class="t" style="top:161.79px;font-size:10.67px;color:#d6dae2;letter-spacing:-0.201px;left:1038.50px;">×î´ó¸¡Ó¯±ÈÀý</div>
<div class="t" style="top:161.79px;font-size:10.67px;color:#d6dae2;letter-spacing:-0.163px;left:1118.50px;">×îÐ¡|Æ½¾ù|×î´ó³Ö²ÖÊ±¼ä</div>
<div class="t" style="top:161.79px;font-size:10.67px;color:#d6dae2;letter-spacing:-0.072px;left:1308.50px;">Ê¤ÂÊ</div>
<div class="t" style="top:175.69px;font-size:10.67px;color:#d6dae2;left:288.00px;">2023.04.27</div>
<div class="t" style="top:175.69px;font-size:10.67px;color:#00e268;left:368.50px;">16.81</div>
<div class="t" style="top:175.69px;font-size:10.67px;color:#00e268;left:418.50px;">1.50 | 1.79</div>
<div class="t" style="top:175.69px;font-size:10.67px;color:#00e268;left:488.50px;">10</div>
<div class="t" style="top:175.69px;font-size:10.67px;color:#00e268;left:518.50px;">-296.84</div>
<div class="t" style="top:175.69px;font-size:10.67px;color:#00e268;left:598.50px;">-31.56 %</div>
<div class="t" style="top:175.69px;font-size:10.67px;color:#d6dae2;left:658.50px;">0</div>
<div class="t" style="top:175.69px;font-size:10.67px;color:#d6dae2;left:718.00px;">643.73</div>
<div class="t" style="top:175.69px;font-size:10.67px;color:#00e268;left:798.50px;">-105.27</div>
<div class="t" style="top:175.69px;font-size:10.67px;color:#00e268;left:878.50px;">-12.30 %</div>
<div class="t" style="top:175.69px;font-size:10.67px;color:#f21616;left:958.50px;">100.92</div>
<div class="t" style="top:175.69px;font-size:10.67px;color:#f21616;left:1038.50px;">15.19 %</div>
<div class="t" style="top:175.69px;font-size:10.67px;color:#d6dae2;left:1118.50px;">0:00:03 | 0:00:14 | 0:00:37</div>
<div class="t" style="top:175.69px;font-size:10.67px;color:#d6dae2;left:1308.50px;">20.00 %</div>
<div class="t" style="top:190.09px;font-size:10.67px;color:#d6dae2;left:288.00px;">2023.04.26</div>
<div class="t" style="top:190.09px;font-size:10.67px;color:#00e268;left:368.50px;">4.34</div>
<div class="t" style="top:190.09px;font-size:10.67px;color:#00e268;left:418.50px;">1.38 | 1.57</div>
<div class="t" style="top:190.09px;font-size:10.67px;color:#00e268;left:488.50px;">3</div>
<div class="t" style="top:190.09px;font-size:10.67px;color:#00e268;left:518.50px;">-59.43</div>
<div class="t" style="top:190.09px;font-size:10.67px;color:#00e268;left:598.50px;">-5.94 %</div>
<div class="t" style="top:190.09px;font-size:10.67px;color:#f21616;left:658.50px;">1000</div>
<div class="t" style="top:190.09px;font-size:10.67px;color:#d6dae2;left:718.00px;">940.57</div>
<div class="t" style="top:190.09px;font-size:10.67px;color:#00e268;left:798.50px;">-44.96</div>
<div class="t" style="top:190.09px;font-size:10.67px;color:#00e268;left:878.50px;">-4.56 %</div>
<div class="t" style="top:190.09px;font-size:10.67px;color:#f21616;left:958.50px;">13.21</div>
<div class="t" style="top:190.09px;font-size:10.67px;color:#f21616;left:1038.50px;">1.34 %</div>
<div class="t" style="top:190.09px;font-size:10.67px;color:#d6dae2;left:1118.50px;">0:00:18 | 0:00:21 | 0:00:27</div>
<div class="t" style="top:190.09px;font-size:10.67px;color:#d6dae2;left:1308.50px;">-100.00 %</div>
<div class="t" style="top:204.59px;font-size:10.67px;color:#d6dae2;left:288.00px;">ºÏ¼Æ</div>
<div class="t" style="top:204.59px;font-size:10.67px;color:#00e268;left:368.50px;">21.15</div>
<div class="t" style="top:204.59px;font-size:10.67px;color:#00e268;left:518.50px;">-356.27</div>
<div class="t" style="top:204.59px;font-size:10.67px;color:#00e268;left:598.50px;">-35.63 %</div>
<div class="t" style="top:204.59px;font-size:10.67px;color:#f21616;left:658.50px;">1000</div>
<div class="t" style="top:204.59px;font-size:10.67px;color:#00e268;left:798.50px;">-105.27</div>
<div class="t" style="top:204.59px;font-size:10.67px;color:#00e268;left:878.50px;">-12.3 %</div>
<div class="t" style="top:204.59px;font-size:10.67px;color:#f21616;left:958.50px;">100.92</div>
<div class="t" style="top:204.59px;font-size:10.67px;color:#f21616;left:1038.50px;">15.19 %</div>
<div class="r" style="left:0px;top:661px;width:1909px;height:254px;background:#f0f0f0;"></div>
<div class="r" style="left:0px;top:661px;width:1909px;height:1px;background:#a0a0a0;"></div>
<div class="r" style="left:0px;top:675px;width:10px;height:240px;background:linear-gradient(to bottom,#e1eaf5,#c2d1e4);"></div>
<div class="r" style="left:10px;top:662px;width:1px;height:253px;background:#a0a0a0;"></div>
<svg style="left:0px;top:662px" width="8" height="8" viewBox="0 0 8 8"><path d="M0.500 1.500 L5 6.500 M5 1.500 L0.500 6.500" stroke="#000" stroke-width="1.500" fill="none"/></svg>
<div class="t" style="left:-1.500px;top:911px;font-size:11px;color:#000;letter-spacing:-0.400px;transform-origin:0 0;transform:rotate(-90deg)">Terminal</div>
<div class="r" style="left:11px;top:662px;width:1883px;height:231px;background:#fff;"></div>
<div class="r" style="left:11px;top:662px;width:1883px;height:19px;background:linear-gradient(#ffffff,#f7f7f7);"></div>
<div class="r" style="left:11px;top:680px;width:1883px;height:1px;background:#dcdcdc;"></div>
<div class="t" style="top:665.64px;font-size:12px;color:#000;letter-spacing:-0.035px;left:17.50px;">Order</div>
<div class="t" style="top:665.64px;font-size:12px;color:#000;letter-spacing:0.445px;right:1570.06px;">Time</div>
<div class="t" style="top:665.64px;font-size:12px;color:#000;letter-spacing:0.496px;right:1449.30px;">Type</div>
<div class="t" style="top:665.64px;font-size:12px;color:#000;letter-spacing:0.164px;right:1369.64px;">Size</div>
<div class="t" style="top:665.64px;font-size:12px;color:#000;right:1268.80px;">Symbol</div>
<div class="t" style="top:665.64px;font-size:12px;color:#000;letter-spacing:0.332px;right:1167.47px;">Price</div>
<div class="t" style="top:665.64px;font-size:12px;color:#000;letter-spacing:0.064px;right:1066.74px;">S / L</div>
<div class="t" style="top:665.64px;font-size:12px;color:#000;letter-spacing:0.176px;right:965.62px;">T / P</div>
<div class="t" style="top:665.64px;font-size:12px;color:#000;letter-spacing:0.445px;right:743.36px;">Time</div>
<div class="t" style="top:665.64px;font-size:12px;color:#000;letter-spacing:0.332px;right:642.47px;">Price</div>
<div class="t" style="top:665.64px;font-size:12px;color:#000;letter-spacing:0.199px;right:541.60px;">Commission</div>
<div class="t" style="top:665.64px;font-size:12px;color:#000;right:440.80px;">Swap</div>
<div class="t" style="top:665.64px;font-size:12px;color:#000;letter-spacing:0.332px;right:329.47px;">Profit</div>
<div class="t" style="top:665.64px;font-size:12px;color:#000;letter-spacing:0.141px;right:21.06px;">Comment</div>
<svg style="left:349px;top:667px" width="8" height="8" viewBox="0 0 8 8"><path d="M0.500 1 H6.500 L3.500 7Z" fill="none" stroke="#808080" stroke-width="0.800"/></svg>
<div class="r" style="left:11px;top:681px;width:1883px;height:211px;overflow:hidden">
<div class="r" style="left:0px;top:0px;width:1883px;height:20px;background:#3399ff;"></div>
<div class="r" style="left:0px;top:20px;width:1883px;height:1px;background:#d6d6d6;"></div>
<svg style="left:3.5px;top:3px" width="14" height="15" viewBox="0 0 14 15"><path d="M1 0.500 H7.500 L10.500 3.500 V12.500 H1Z" fill="#fff" stroke="#6e6e6e" stroke-width="1"/><path d="M7.500 0.500 V3.500 H10.500" fill="#e8e8e8" stroke="#6e6e6e" stroke-width=".8"/><path d="M1.500 13.300 H10" stroke="#c0c0c0" stroke-width=".8"/><circle cx="10" cy="11" r="3" fill="#1e9be8" stroke="#0a6cb8" stroke-width=".7"/><path d="M8.300 10 q1.500 -1.600 3 -.5" stroke="#9ad4ff" stroke-width=".9" fill="none"/></svg>
<div class="t" style="top:3.84px;font-size:12px;color:#fff;letter-spacing:-0.674px;left:22.00px;">669708552</div>
<div class="t" style="top:3.84px;font-size:12px;color:#fff;letter-spacing:-0.585px;right:1534.28px;">2023.04.27 16:59:53</div>
<div class="t" style="top:3.84px;font-size:12px;color:#fff;letter-spacing:0.205px;right:1433.00px;">buy stop</div>
<div class="t" style="top:3.84px;font-size:12px;color:#fff;letter-spacing:-0.339px;right:1354.14px;">1.61</div>
<div class="t" style="top:3.84px;font-size:12px;color:#fff;letter-spacing:-0.199px;right:1252.90px;">eurusd</div>
<div class="t" style="top:3.84px;font-size:12px;color:#fff;letter-spacing:-0.583px;right:1151.18px;">1.10157</div>
<div class="t" style="top:3.84px;font-size:12px;color:#fff;letter-spacing:-0.583px;right:1050.18px;">1.10097</div>
<div class="t" style="top:3.84px;font-size:12px;color:#fff;letter-spacing:-0.583px;right:949.18px;">1.10177</div>
<div class="t" style="top:3.84px;font-size:12px;color:#fff;letter-spacing:-0.585px;right:727.78px;">2023.04.27 16:59:54</div>
<div class="t" style="top:3.84px;font-size:12px;color:#fff;letter-spacing:-0.583px;right:626.38px;">1.10127</div>
<div class="t" style="top:3.84px;font-size:12px;color:#fff;letter-spacing:-0.078px;right:4.08px;">cancelled</div>
<div class="r" style="left:0px;top:21px;width:1883px;height:19px;background:#ebebeb;"></div>
<div class="r" style="left:0px;top:40px;width:1883px;height:1px;background:#d6d6d6;"></div>
<svg style="left:3.5px;top:23px" width="14" height="15" viewBox="0 0 14 15"><path d="M1 0.500 H7.500 L10.500 3.500 V12.500 H1Z" fill="#fff" stroke="#6e6e6e" stroke-width="1"/><path d="M7.500 0.500 V3.500 H10.500" fill="#e8e8e8" stroke="#6e6e6e" stroke-width=".8"/><path d="M1.500 13.300 H10" stroke="#c0c0c0" stroke-width=".8"/><circle cx="10" cy="11" r="3" fill="#1e9be8" stroke="#0a6cb8" stroke-width=".7"/><path d="M8.300 10 q1.500 -1.600 3 -.5" stroke="#9ad4ff" stroke-width=".9" fill="none"/></svg>
<div class="t" style="top:23.84px;font-size:12px;color:#000;letter-spacing:-0.674px;left:22.00px;">669708471</div>
<div class="t" style="top:23.84px;font-size:12px;color:#000;letter-spacing:-0.585px;right:1534.28px;">2023.04.27 16:59:51</div>
<div class="t" style="top:23.84px;font-size:12px;color:#000;letter-spacing:0.205px;right:1433.00px;">buy stop</div>
<div class="t" style="top:23.84px;font-size:12px;color:#000;letter-spacing:-0.339px;right:1354.14px;">1.61</div>
<div class="t" style="top:23.84px;font-size:12px;color:#000;letter-spacing:-0.199px;right:1252.90px;">eurusd</div>
<div class="t" style="top:23.84px;font-size:12px;color:#000;letter-spacing:-0.583px;right:1151.18px;">1.10155</div>
<div class="t" style="top:23.84px;font-size:12px;color:#000;letter-spacing:-0.583px;right:1050.18px;">1.10095</div>
<div class="t" style="top:23.84px;font-size:12px;color:#000;letter-spacing:-0.583px;right:949.18px;">1.10175</div>
<div class="t" style="top:23.84px;font-size:12px;color:#000;letter-spacing:-0.585px;right:727.78px;">2023.04.27 16:59:52</div>
<div class="t" style="top:23.84px;font-size:12px;color:#000;letter-spacing:-0.583px;right:626.38px;">1.10126</div>
<div class="t" style="top:23.84px;font-size:12px;color:#000;letter-spacing:-0.078px;right:4.08px;">cancelled</div>
<div class="r" style="left:0px;top:41px;width:1883px;height:19px;background:#fff;"></div>
<div class="r" style="left:0px;top:60px;width:1883px;height:1px;background:#d6d6d6;"></div>
<svg style="left:3.5px;top:43px" width="14" height="15" viewBox="0 0 14 15"><path d="M1 0.500 H7.500 L10.500 3.500 V12.500 H1Z" fill="#fff" stroke="#6e6e6e" stroke-width="1"/><path d="M7.500 0.500 V3.500 H10.500" fill="#e8e8e8" stroke="#6e6e6e" stroke-width=".8"/><path d="M1.500 13.300 H10" stroke="#c0c0c0" stroke-width=".8"/><circle cx="10" cy="11" r="3" fill="#1e9be8" stroke="#0a6cb8" stroke-width=".7"/><path d="M8.300 10 q1.500 -1.600 3 -.5" stroke="#9ad4ff" stroke-width=".9" fill="none"/></svg>
<div class="t" style="top:43.84px;font-size:12px;color:#000;letter-spacing:-0.674px;left:22.00px;">669708429</div>
<div class="t" style="top:43.84px;font-size:12px;color:#000;letter-spacing:-0.585px;right:1534.28px;">2023.04.27 16:59:49</div>
<div class="t" style="top:43.84px;font-size:12px;color:#000;letter-spacing:0.205px;right:1433.00px;">buy stop</div>
<div class="t" style="top:43.84px;font-size:12px;color:#000;letter-spacing:-0.339px;right:1354.14px;">1.61</div>
<div class="t" style="top:43.84px;font-size:12px;color:#000;letter-spacing:-0.199px;right:1252.90px;">eurusd</div>
<div class="t" style="top:43.84px;font-size:12px;color:#000;letter-spacing:-0.583px;right:1151.18px;">1.10151</div>
<div class="t" style="top:43.84px;font-size:12px;color:#000;letter-spacing:-0.583px;right:1050.18px;">1.10091</div>
<div class="t" style="top:43.84px;font-size:12px;color:#000;letter-spacing:-0.583px;right:949.18px;">1.10171</div>
<div class="t" style="top:43.84px;font-size:12px;color:#000;letter-spacing:-0.585px;right:727.78px;">2023.04.27 16:59:50</div>
<div class="t" style="top:43.84px;font-size:12px;color:#000;letter-spacing:-0.583px;right:626.38px;">1.10128</div>
<div class="t" style="top:43.84px;font-size:12px;color:#000;letter-spacing:-0.078px;right:4.08px;">cancelled</div>
<div class="r" style="left:0px;top:61px;width:1883px;height:19px;background:#ebebeb;"></div>
<div class="r" style="left:0px;top:80px;width:1883px;height:1px;background:#d6d6d6;"></div>
<svg style="left:3.5px;top:63px" width="14" height="15" viewBox="0 0 14 15"><path d="M1 0.500 H7.500 L10.500 3.500 V12.500 H1Z" fill="#fff" stroke="#6e6e6e" stroke-width="1"/><path d="M7.500 0.500 V3.500 H10.500" fill="#e8e8e8" stroke="#6e6e6e" stroke-width=".8"/><path d="M1.500 13.300 H10" stroke="#c0c0c0" stroke-width=".8"/><circle cx="10" cy="11" r="3" fill="#1e9be8" stroke="#0a6cb8" stroke-width=".7"/><path d="M8.300 10 q1.500 -1.600 3 -.5" stroke="#9ad4ff" stroke-width=".9" fill="none"/></svg>
<div class="t" style="top:63.84px;font-size:12px;color:#000;letter-spacing:-0.674px;left:22.00px;">669708418</div>
<div class="t" style="top:63.84px;font-size:12px;color:#000;letter-spacing:-0.585px;right:1534.28px;">2023.04.27 16:59:48</div>
<div class="t" style="top:63.84px;font-size:12px;color:#000;letter-spacing:0.205px;right:1433.00px;">buy stop</div>
<div class="t" style="top:63.84px;font-size:12px;color:#000;letter-spacing:-0.339px;right:1354.14px;">1.61</div>
<div class="t" style="top:63.84px;font-size:12px;color:#000;letter-spacing:-0.199px;right:1252.90px;">eurusd</div>
<div class="t" style="top:63.84px;font-size:12px;color:#000;letter-spacing:-0.583px;right:1151.18px;">1.10127</div>
<div class="t" style="top:63.84px;font-size:12px;color:#000;letter-spacing:-0.583px;right:1050.18px;">1.10067</div>
<div class="t" style="top:63.84px;font-size:12px;color:#000;letter-spacing:-0.583px;right:949.18px;">1.10147</div>
<div class="t" style="top:63.84px;font-size:12px;color:#000;letter-spacing:-0.585px;right:727.78px;">2023.04.27 16:59:49</div>
<div class="t" style="top:63.84px;font-size:12px;color:#000;letter-spacing:-0.583px;right:626.38px;">1.10121</div>
<div class="t" style="top:63.84px;font-size:12px;color:#000;letter-spacing:-0.078px;right:4.08px;">cancelled</div>
<div class="r" style="left:0px;top:81px;width:1883px;height:19px;background:#fff;"></div>
<div class="r" style="left:0px;top:100px;width:1883px;height:1px;background:#d6d6d6;"></div>
<svg style="left:3.5px;top:83px" width="14" height="15" viewBox="0 0 14 15"><path d="M1 0.500 H7.500 L10.500 3.500 V12.500 H1Z" fill="#fff" stroke="#6e6e6e" stroke-width="1"/><path d="M7.500 0.500 V3.500 H10.500" fill="#e8e8e8" stroke="#6e6e6e" stroke-width=".8"/><path d="M1.500 13.300 H10" stroke="#c0c0c0" stroke-width=".8"/><circle cx="10" cy="11" r="3" fill="#1e9be8" stroke="#0a6cb8" stroke-width=".7"/><path d="M8.300 10 q1.500 -1.600 3 -.5" stroke="#9ad4ff" stroke-width=".9" fill="none"/></svg>
<div class="t" style="top:83.84px;font-size:12px;color:#000;letter-spacing:-0.674px;left:22.00px;">669708323</div>
<div class="t" style="top:83.84px;font-size:12px;color:#000;letter-spacing:-0.585px;right:1534.28px;">2023.04.27 16:59:38</div>
<div class="t" style="top:83.84px;font-size:12px;color:#000;letter-spacing:0.205px;right:1433.00px;">buy stop</div>
<div class="t" style="top:83.84px;font-size:12px;color:#000;letter-spacing:-0.339px;right:1354.14px;">1.61</div>
<div class="t" style="top:83.84px;font-size:12px;color:#000;letter-spacing:-0.199px;right:1252.90px;">eurusd</div>
<div class="t" style="top:83.84px;font-size:12px;color:#000;letter-spacing:-0.583px;right:1151.18px;">1.10125</div>
<div class="t" style="top:83.84px;font-size:12px;color:#000;letter-spacing:-0.583px;right:1050.18px;">1.10065</div>
<div class="t" style="top:83.84px;font-size:12px;color:#000;letter-spacing:-0.583px;right:949.18px;">1.10145</div>
<div class="t" style="top:83.84px;font-size:12px;color:#000;letter-spacing:-0.585px;right:727.78px;">2023.04.27 16:59:39</div>
<div class="t" style="top:83.84px;font-size:12px;color:#000;letter-spacing:-0.583px;right:626.38px;">1.10103</div>
<div class="t" style="top:83.84px;font-size:12px;color:#000;letter-spacing:-0.078px;right:4.08px;">cancelled</div>
<div class="r" style="left:0px;top:101px;width:1883px;height:19px;background:#ebebeb;"></div>
<div class="r" style="left:0px;top:120px;width:1883px;height:1px;background:#d6d6d6;"></div>
<svg style="left:3.5px;top:103px" width="14" height="15" viewBox="0 0 14 15"><path d="M1 0.500 H7.500 L10.500 3.500 V12.500 H1Z" fill="#fff" stroke="#6e6e6e" stroke-width="1"/><path d="M7.500 0.500 V3.500 H10.500" fill="#e8e8e8" stroke="#6e6e6e" stroke-width=".8"/><path d="M1.500 13.300 H10" stroke="#c0c0c0" stroke-width=".8"/><circle cx="10" cy="11" r="3" fill="#1e9be8" stroke="#0a6cb8" stroke-width=".7"/><path d="M8.300 10 q1.500 -1.600 3 -.5" stroke="#9ad4ff" stroke-width=".9" fill="none"/></svg>
<div class="t" style="top:103.84px;font-size:12px;color:#000;letter-spacing:-0.674px;left:22.00px;">669708315</div>
<div class="t" style="top:103.84px;font-size:12px;color:#000;letter-spacing:-0.585px;right:1534.28px;">2023.04.27 16:59:36</div>
<div class="t" style="top:103.84px;font-size:12px;color:#000;letter-spacing:0.205px;right:1433.00px;">buy stop</div>
<div class="t" style="top:103.84px;font-size:12px;color:#000;letter-spacing:-0.339px;right:1354.14px;">1.61</div>
<div class="t" style="top:103.84px;font-size:12px;color:#000;letter-spacing:-0.199px;right:1252.90px;">eurusd</div>
<div class="t" style="top:103.84px;font-size:12px;color:#000;letter-spacing:-0.583px;right:1151.18px;">1.10127</div>
<div class="t" style="top:103.84px;font-size:12px;color:#000;letter-spacing:-0.583px;right:1050.18px;">1.10067</div>
<div class="t" style="top:103.84px;font-size:12px;color:#000;letter-spacing:-0.583px;right:949.18px;">1.10147</div>
<div class="t" style="top:103.84px;font-size:12px;color:#000;letter-spacing:-0.585px;right:727.78px;">2023.04.27 16:59:37</div>
<div class="t" style="top:103.84px;font-size:12px;color:#000;letter-spacing:-0.583px;right:626.38px;">1.10095</div>
<div class="t" style="top:103.84px;font-size:12px;color:#000;letter-spacing:-0.078px;right:4.08px;">cancelled</div>
<div class="r" style="left:0px;top:121px;width:1883px;height:19px;background:#fff;"></div>
<div class="r" style="left:0px;top:140px;width:1883px;height:1px;background:#d6d6d6;"></div>
<svg style="left:3.5px;top:123px" width="14" height="15" viewBox="0 0 14 15"><path d="M1 0.500 H7.500 L10.500 3.500 V12.500 H1Z" fill="#fff" stroke="#6e6e6e" stroke-width="1"/><path d="M7.500 0.500 V3.500 H10.500" fill="#e8e8e8" stroke="#6e6e6e" stroke-width=".8"/><path d="M1.500 13.300 H10" stroke="#c0c0c0" stroke-width=".8"/><circle cx="10" cy="11" r="3" fill="#1e9be8" stroke="#0a6cb8" stroke-width=".7"/><path d="M8.300 10 q1.500 -1.600 3 -.5" stroke="#9ad4ff" stroke-width=".9" fill="none"/></svg>
<div class="t" style="top:123.84px;font-size:12px;color:#000;letter-spacing:-0.674px;left:22.00px;">669708302</div>
<div class="t" style="top:123.84px;font-size:12px;color:#000;letter-spacing:-0.585px;right:1534.28px;">2023.04.27 16:59:35</div>
<div class="t" style="top:123.84px;font-size:12px;color:#000;letter-spacing:0.205px;right:1433.00px;">buy stop</div>
<div class="t" style="top:123.84px;font-size:12px;color:#000;letter-spacing:-0.339px;right:1354.14px;">1.61</div>
<div class="t" style="top:123.84px;font-size:12px;color:#000;letter-spacing:-0.199px;right:1252.90px;">eurusd</div>
<div class="t" style="top:123.84px;font-size:12px;color:#000;letter-spacing:-0.583px;right:1151.18px;">1.10132</div>
<div class="t" style="top:123.84px;font-size:12px;color:#000;letter-spacing:-0.583px;right:1050.18px;">1.10072</div>
<div class="t" style="top:123.84px;font-size:12px;color:#000;letter-spacing:-0.583px;right:949.18px;">1.10152</div>
<div class="t" style="top:123.84px;font-size:12px;color:#000;letter-spacing:-0.585px;right:727.78px;">2023.04.27 16:59:36</div>
<div class="t" style="top:123.84px;font-size:12px;color:#000;letter-spacing:-0.583px;right:626.38px;">1.10095</div>
<div class="t" style="top:123.84px;font-size:12px;color:#000;letter-spacing:-0.078px;right:4.08px;">cancelled</div>
<div class="r" style="left:0px;top:141px;width:1883px;height:19px;background:#ebebeb;"></div>
<div class="r" style="left:0px;top:160px;width:1883px;height:1px;background:#d6d6d6;"></div>
<svg style="left:3.5px;top:143px" width="14" height="15" viewBox="0 0 14 15"><path d="M1 0.500 H7.500 L10.500 3.500 V12.500 H1Z" fill="#fff" stroke="#6e6e6e" stroke-width="1"/><path d="M7.500 0.500 V3.500 H10.500" fill="#e8e8e8" stroke="#6e6e6e" stroke-width=".8"/><path d="M1.500 13.300 H10" stroke="#c0c0c0" stroke-width=".8"/><circle cx="10" cy="11" r="3" fill="#1e9be8" stroke="#0a6cb8" stroke-width=".7"/><path d="M8.300 10 q1.500 -1.600 3 -.5" stroke="#9ad4ff" stroke-width=".9" fill="none"/></svg>
<div class="t" style="top:143.84px;font-size:12px;color:#000;letter-spacing:-0.674px;left:22.00px;">669708286</div>
<div class="t" style="top:143.84px;font-size:12px;color:#000;letter-spacing:-0.585px;right:1534.28px;">2023.04.27 16:59:32</div>
<div class="t" style="top:143.84px;font-size:12px;color:#000;letter-spacing:0.205px;right:1433.00px;">buy stop</div>
<div class="t" style="top:143.84px;font-size:12px;color:#000;letter-spacing:-0.339px;right:1354.14px;">1.61</div>
<div class="t" style="top:143.84px;font-size:12px;color:#000;letter-spacing:-0.199px;right:1252.90px;">eurusd</div>
<div class="t" style="top:143.84px;font-size:12px;color:#000;letter-spacing:-0.583px;right:1151.18px;">1.10133</div>
<div class="t" style="top:143.84px;font-size:12px;color:#000;letter-spacing:-0.583px;right:1050.18px;">1.10073</div>
<div class="t" style="top:143.84px;font-size:12px;color:#000;letter-spacing:-0.583px;right:949.18px;">1.10153</div>
<div class="t" style="top:143.84px;font-size:12px;color:#000;letter-spacing:-0.585px;right:727.78px;">2023.04.27 16:59:35</div>
<div class="t" style="top:143.84px;font-size:12px;color:#000;letter-spacing:-0.583px;right:626.38px;">1.10102</div>
<div class="t" style="top:143.84px;font-size:12px;color:#000;letter-spacing:-0.078px;right:4.08px;">cancelled</div>
<div class="r" style="left:0px;top:161px;width:1883px;height:19px;background:#fff;"></div>
<div class="r" style="left:0px;top:180px;width:1883px;height:1px;background:#d6d6d6;"></div>
<svg style="left:3.5px;top:163px" width="14" height="15" viewBox="0 0 14 15"><path d="M1 0.500 H7.500 L10.500 3.500 V12.500 H1Z" fill="#fff" stroke="#6e6e6e" stroke-width="1"/><path d="M7.500 0.500 V3.500 H10.500" fill="#e8e8e8" stroke="#6e6e6e" stroke-width=".8"/><path d="M1.500 13.300 H10" stroke="#c0c0c0" stroke-width=".8"/><circle cx="10" cy="11" r="3" fill="#1e9be8" stroke="#0a6cb8" stroke-width=".7"/><path d="M8.300 10 q1.500 -1.600 3 -.5" stroke="#9ad4ff" stroke-width=".9" fill="none"/></svg>
<div class="t" style="top:163.84px;font-size:12px;color:#000;letter-spacing:-0.674px;left:22.00px;">669708277</div>
<div class="t" style="top:163.84px;font-size:12px;color:#000;letter-spacing:-0.585px;right:1534.28px;">2023.04.27 16:59:31</div>
<div class="t" style="top:163.84px;font-size:12px;color:#000;letter-spacing:0.205px;right:1433.00px;">buy stop</div>
<div class="t" style="top:163.84px;font-size:12px;color:#000;letter-spacing:-0.339px;right:1354.14px;">1.61</div>
<div class="t" style="top:163.84px;font-size:12px;color:#000;letter-spacing:-0.199px;right:1252.90px;">eurusd</div>
<div class="t" style="top:163.84px;font-size:12px;color:#000;letter-spacing:-0.583px;right:1151.18px;">1.10140</div>
<div class="t" style="top:163.84px;font-size:12px;color:#000;letter-spacing:-0.583px;right:1050.18px;">1.10080</div>
<div class="t" style="top:163.84px;font-size:12px;color:#000;letter-spacing:-0.583px;right:949.18px;">1.10160</div>
<div class="t" style="top:163.84px;font-size:12px;color:#000;letter-spacing:-0.585px;right:727.78px;">2023.04.27 16:59:31</div>
<div class="t" style="top:163.84px;font-size:12px;color:#000;letter-spacing:-0.583px;right:626.38px;">1.10103</div>
<div class="t" style="top:163.84px;font-size:12px;color:#000;letter-spacing:-0.078px;right:4.08px;">cancelled</div>
<div class="r" style="left:0px;top:181px;width:1883px;height:19px;background:#ebebeb;"></div>
<div class="r" style="left:0px;top:200px;width:1883px;height:1px;background:#d6d6d6;"></div>
<svg style="left:3.5px;top:183px" width="14" height="15" viewBox="0 0 14 15"><path d="M1 0.500 H7.500 L10.500 3.500 V12.500 H1Z" fill="#fff" stroke="#6e6e6e" stroke-width="1"/><path d="M7.500 0.500 V3.500 H10.500" fill="#e8e8e8" stroke="#6e6e6e" stroke-width=".8"/><path d="M1.500 13.300 H10" stroke="#c0c0c0" stroke-width=".8"/><circle cx="10" cy="11" r="3" fill="#1e9be8" stroke="#0a6cb8" stroke-width=".7"/><path d="M8.300 10 q1.500 -1.600 3 -.5" stroke="#9ad4ff" stroke-width=".9" fill="none"/></svg>
<div class="t" style="top:183.84px;font-size:12px;color:#000;letter-spacing:-0.674px;left:22.00px;">669708271</div>
<div class="t" style="top:183.84px;font-size:12px;color:#000;letter-spacing:-0.585px;right:1534.28px;">2023.04.27 16:59:30</div>
<div class="t" style="top:183.84px;font-size:12px;color:#000;letter-spacing:0.205px;right:1433.00px;">buy stop</div>
<div class="t" style="top:183.84px;font-size:12px;color:#000;letter-spacing:-0.339px;right:1354.14px;">1.61</div>
<div class="t" style="top:183.84px;font-size:12px;color:#000;letter-spacing:-0.199px;right:1252.90px;">eurusd</div>
<div class="t" style="top:183.84px;font-size:12px;color:#000;letter-spacing:-0.583px;right:1151.18px;">1.10139</div>
<div class="t" style="top:183.84px;font-size:12px;color:#000;letter-spacing:-0.583px;right:1050.18px;">1.10079</div>
<div class="t" style="top:183.84px;font-size:12px;color:#000;letter-spacing:-0.583px;right:949.18px;">1.10159</div>
<div class="t" style="top:183.84px;font-size:12px;color:#000;letter-spacing:-0.585px;right:727.78px;">2023.04.27 16:59:31</div>
<div class="t" style="top:183.84px;font-size:12px;color:#000;letter-spacing:-0.583px;right:626.38px;">1.10103</div>
<div class="t" style="top:183.84px;font-size:12px;color:#000;letter-spacing:-0.078px;right:4.08px;">cancelled</div>
<div class="r" style="left:0px;top:201px;width:1883px;height:19px;background:#fff;"></div>
<div class="r" style="left:0px;top:220px;width:1883px;height:1px;background:#d6d6d6;"></div>
<svg style="left:3.5px;top:203px" width="14" height="15" viewBox="0 0 14 15"><path d="M1 0.500 H7.500 L10.500 3.500 V12.500 H1Z" fill="#fff" stroke="#6e6e6e" stroke-width="1"/><path d="M7.500 0.500 V3.500 H10.500" fill="#e8e8e8" stroke="#6e6e6e" stroke-width=".8"/><path d="M1.500 13.300 H10" stroke="#c0c0c0" stroke-width=".8"/><circle cx="10" cy="11" r="3" fill="#1e9be8" stroke="#0a6cb8" stroke-width=".7"/><path d="M8.300 10 q1.500 -1.600 3 -.5" stroke="#9ad4ff" stroke-width=".9" fill="none"/></svg>
<div class="t" style="top:203.84px;font-size:12px;color:#000;letter-spacing:-0.674px;left:22.00px;">669708258</div>
<div class="t" style="top:203.84px;font-size:12px;color:#000;letter-spacing:-0.585px;right:1534.28px;">2023.04.27 16:59:29</div>
<div class="t" style="top:203.84px;font-size:12px;color:#000;letter-spacing:0.205px;right:1433.00px;">buy stop</div>
<div class="t" style="top:203.84px;font-size:12px;color:#000;letter-spacing:-0.339px;right:1354.14px;">1.61</div>
<div class="t" style="top:203.84px;font-size:12px;color:#000;letter-spacing:-0.199px;right:1252.90px;">eurusd</div>
<div class="t" style="top:203.84px;font-size:12px;color:#000;letter-spacing:-0.583px;right:1151.18px;">1.10136</div>
<div class="t" style="top:203.84px;font-size:12px;color:#000;letter-spacing:-0.583px;right:1050.18px;">1.10076</div>
<div class="t" style="top:203.84px;font-size:12px;color:#000;letter-spacing:-0.583px;right:949.18px;">1.10156</div>
<div class="t" style="top:203.84px;font-size:12px;color:#000;letter-spacing:-0.585px;right:727.78px;">2023.04.27 16:59:30</div>
<div class="t" style="top:203.84px;font-size:12px;color:#000;letter-spacing:-0.583px;right:626.38px;">1.10106</div>
<div class="t" style="top:203.84px;font-size:12px;color:#000;letter-spacing:-0.078px;right:4.08px;">cancelled</div>
<div class="r" style="left:131px;top:0px;width:1px;height:211px;background:#d0d0d0;"></div>
<div class="r" style="left:352px;top:0px;width:1px;height:211px;background:#d0d0d0;"></div>
<div class="r" style="left:453px;top:0px;width:1px;height:211px;background:#d0d0d0;"></div>
<div class="r" style="left:533px;top:0px;width:1px;height:211px;background:#d0d0d0;"></div>
<div class="r" style="left:634px;top:0px;width:1px;height:211px;background:#d0d0d0;"></div>
<div class="r" style="left:735px;top:0px;width:1px;height:211px;background:#d0d0d0;"></div>
<div class="r" style="left:836px;top:0px;width:1px;height:211px;background:#d0d0d0;"></div>
<div class="r" style="left:937px;top:0px;width:1px;height:211px;background:#d0d0d0;"></div>
<div class="r" style="left:1159px;top:0px;width:1px;height:211px;background:#d0d0d0;"></div>
<div class="r" style="left:1260px;top:0px;width:1px;height:211px;background:#d0d0d0;"></div>
<div class="r" style="left:1361px;top:0px;width:1px;height:211px;background:#d0d0d0;"></div>
<div class="r" style="left:1462px;top:0px;width:1px;height:211px;background:#d0d0d0;"></div>
<div class="r" style="left:1573px;top:0px;width:1px;height:211px;background:#d0d0d0;"></div>
</div>
<div class="r" style="left:142px;top:663px;width:1px;height:17px;background:#e2e2e2;"></div>
<div class="r" style="left:363px;top:663px;width:1px;height:17px;background:#e2e2e2;"></div>
<div class="r" style="left:464px;top:663px;width:1px;height:17px;background:#e2e2e2;"></div>
<div class="r" style="left:544px;top:663px;width:1px;height:17px;background:#e2e2e2;"></div>
<div class="r" style="left:645px;top:663px;width:1px;height:17px;background:#e2e2e2;"></div>
<div class="r" style="left:746px;top:663px;width:1px;height:17px;background:#e2e2e2;"></div>
<div class="r" style="left:847px;top:663px;width:1px;height:17px;background:#e2e2e2;"></div>
<div class="r" style="left:948px;top:663px;width:1px;height:17px;background:#e2e2e2;"></div>
<div class="r" style="left:1170px;top:663px;width:1px;height:17px;background:#e2e2e2;"></div>
<div class="r" style="left:1271px;top:663px;width:1px;height:17px;background:#e2e2e2;"></div>
<div class="r" style="left:1372px;top:663px;width:1px;height:17px;background:#e2e2e2;"></div>
<div class="r" style="left:1473px;top:663px;width:1px;height:17px;background:#e2e2e2;"></div>
<div class="r" style="left:1584px;top:663px;width:1px;height:17px;background:#e2e2e2;"></div>
<div class="r" style="left:1894px;top:662px;width:15px;height:231px;background:#fdfdfd;"></div>
<div class="r" style="left:1894px;top:662px;width:1px;height:231px;background:#cfcfcf;"></div>
<div class="r" style="left:1895px;top:876px;width:14px;height:1px;background:#d0d0d0;"></div>
<div class="r" style="left:1894px;top:680px;width:15px;height:1px;background:#c8c8c8;"></div>
<div class="r" style="left:1895px;top:681px;width:14px;height:15px;background:#dadada;"></div>
<svg style="left:1898px;top:668px" width="9" height="7" viewBox="0 0 9 7"><path d="M0.500 5.500 L4.500 1.500 L8.500 5.500" fill="none" stroke="#505050" stroke-width="1.200"/></svg>
<svg style="left:1898px;top:880px" width="9" height="7" viewBox="0 0 9 7"><path d="M0.500 1.500 L4.500 5.500 L8.500 1.500" fill="none" stroke="#505050" stroke-width="1.200"/></svg>
<div class="r" style="left:11px;top:892px;width:1898px;height:23px;background:#f0f0f0;"></div>
<div class="r" style="left:11px;top:892.3px;width:120px;height:1.3px;background:#000;"></div>
<div class="r" style="left:236px;top:892.3px;width:1673px;height:1.3px;background:#000;"></div>
<div class="r" style="left:130.5px;top:892px;width:105.5px;height:19.5px;background:#fff;"></div>
<div class="r" style="left:130.1px;top:892px;width:1.3px;height:20px;background:#000;"></div>
<div class="r" style="left:235.4px;top:892px;width:1.3px;height:20px;background:#000;"></div>
<div class="r" style="left:130px;top:910.6px;width:106.7px;height:1.4px;background:#000;"></div>
<div class="t" style="top:896.14px;font-size:12px;color:#6a6a6a;letter-spacing:-0.081px;left:23.00px;">Trade</div>
<div class="t" style="top:896.14px;font-size:12px;color:#6a6a6a;letter-spacing:-0.400px;left:73.50px;">Exposure</div>
<div class="t" style="top:896.14px;font-size:12px;color:#000;letter-spacing:0.165px;left:140.00px;">Account History</div>
<div class="t" style="top:896.14px;font-size:12px;color:#6a6a6a;letter-spacing:-0.177px;left:246.50px;">News</div>
<div class="t" style="top:896.14px;font-size:12px;color:#6a6a6a;letter-spacing:0.021px;left:307.00px;">Alerts</div>
<div class="t" style="top:896.14px;font-size:12px;color:#6a6a6a;letter-spacing:0.207px;left:357.50px;">Mailbox</div>
<div class="t" style="top:896.14px;font-size:12px;color:#6a6a6a;letter-spacing:0.188px;left:431.50px;">Market</div>
<div class="t" style="top:896.14px;font-size:12px;color:#6a6a6a;letter-spacing:-0.223px;left:488.50px;">Signals</div>
<div class="t" style="top:896.14px;font-size:12px;color:#6a6a6a;letter-spacing:-0.005px;left:545.50px;">Articles</div>
<div class="t" style="top:896.14px;font-size:12px;color:#6a6a6a;letter-spacing:-0.453px;left:604.50px;">Code Base</div>
<div class="t" style="top:896.14px;font-size:12px;color:#6a6a6a;letter-spacing:-0.483px;left:679.50px;">Experts</div>
<div class="t" style="top:896.14px;font-size:12px;color:#6a6a6a;letter-spacing:-0.151px;left:736.00px;">Journal</div>
<div class="r" style="left:63px;top:896px;width:1px;height:14px;background:#5a5a5a;"></div>
<div class="r" style="left:297px;top:896px;width:1px;height:14px;background:#5a5a5a;"></div>
<div class="r" style="left:347px;top:896px;width:1px;height:14px;background:#5a5a5a;"></div>
<div class="r" style="left:420.5px;top:896px;width:1px;height:14px;background:#5a5a5a;"></div>
<div class="r" style="left:478px;top:896px;width:1px;height:14px;background:#5a5a5a;"></div>
<div class="r" style="left:535px;top:896px;width:1px;height:14px;background:#5a5a5a;"></div>
<div class="r" style="left:594px;top:896px;width:1px;height:14px;background:#5a5a5a;"></div>
<div class="r" style="left:669px;top:896px;width:1px;height:14px;background:#5a5a5a;"></div>
<div class="r" style="left:726px;top:896px;width:1px;height:14px;background:#5a5a5a;"></div>
<div class="r" style="left:784px;top:896px;width:1px;height:14px;background:#5a5a5a;"></div>
<div class="t" style="top:901.66px;font-size:9.3px;color:#e81010;letter-spacing:0.328px;left:276.50px;font-weight:bold;">36</div>
<div class="t" style="top:901.66px;font-size:9.3px;color:#e81010;letter-spacing:0.328px;left:401.00px;font-weight:bold;">10</div>
</body></html>
